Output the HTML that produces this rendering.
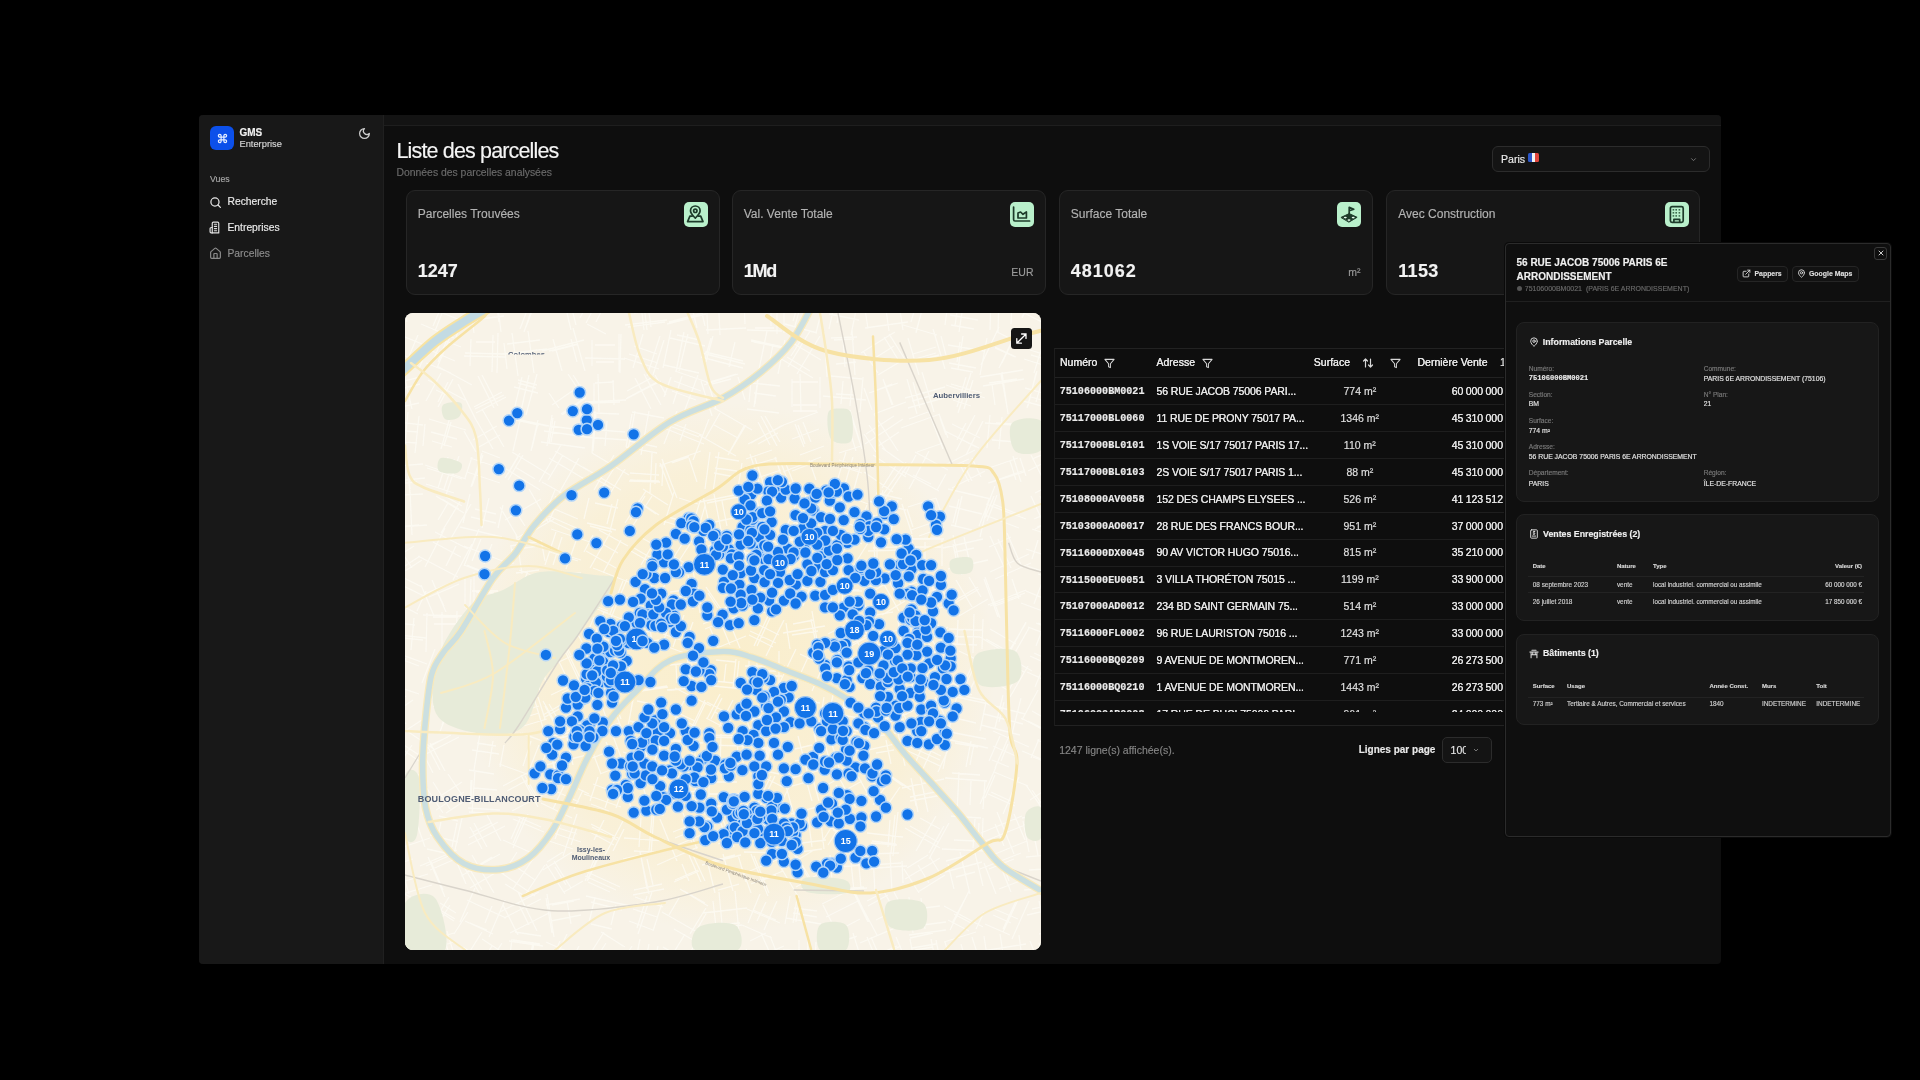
<!DOCTYPE html>
<html><head><meta charset="utf-8">
<style>
*{box-sizing:border-box;margin:0;padding:0}
html,body{width:1920px;height:1080px;overflow:hidden;background:#000}
#root{position:absolute;left:0;top:0;width:1920px;height:1080px;will-change:transform}
.b{position:absolute}
.t{position:absolute;white-space:nowrap;line-height:1;-webkit-text-stroke:0.15px currentColor}
.s{font-family:"Liberation Sans",sans-serif}
.m{font-family:"Liberation Mono",monospace}
i{display:block}
</style></head><body><div id="root">
<div class="b" style="left:199px;top:115px;width:1522px;height:849px;background:#0e0e0e;border-radius:4px"></div>
<div class="b" style="left:199px;top:115px;width:185px;height:849px;background:#181818;border-radius:4px 0 0 4px"></div>
<div class="b" style="left:383px;top:115px;width:1px;height:849px;background:#202020"></div>
<div class="b" style="left:384px;top:115px;width:1337px;height:11px;background:#131313;border-bottom:1px solid #1e1e1e;border-radius:0 4px 0 0"></div>
<div class="b" style="left:210px;top:126px;width:24px;height:24px;background:#0c50ea;border-radius:6px"></div>
<svg class="b" style="left:216.5px;top:132.8px" width="11" height="11" viewBox="0 0 24 24" fill="none" stroke="#e8f0ff" stroke-width="2.6" stroke-linecap="round" stroke-linejoin="round"><path d="M15 6v12a3 3 0 1 0 3-3H6a3 3 0 1 0 3 3V6a3 3 0 1 0-3 3h12a3 3 0 1 0-3-3"/></svg>
<div class="t s" style="left:239.50px;top:127.53px;font-size:10px;color:#f0f0f0;font-weight:bold;">GMS</div>
<div class="t s" style="left:239.50px;top:139.63px;font-size:9.3px;color:#d8d8d8;">Enterprise</div>
<svg class="b" style="left:358px;top:127px" width="13" height="13" viewBox="0 0 24 24" fill="none" stroke="#cfcfcf" stroke-width="2.3" stroke-linecap="round" stroke-linejoin="round"><path d="M12 3a6 6 0 0 0 9 9 9 9 0 1 1-9-9Z"/></svg>
<div class="t s" style="left:210.00px;top:175.05px;font-size:8.8px;color:#a8a8a8;">Vues</div>
<svg class="b" style="left:209px;top:196px" width="13" height="13" viewBox="0 0 24 24" fill="none" stroke="#e8e8e8" stroke-width="2.3" stroke-linecap="round"><circle cx="11" cy="11" r="7.5"/><path d="m21 21-4.3-4.3"/></svg>
<div class="t s" style="left:227.50px;top:197.28px;font-size:10.3px;color:#ececec;">Recherche</div>
<svg class="b" style="left:209px;top:221px" width="13" height="13" viewBox="0 0 24 24" fill="none" stroke="#e0e0e0" stroke-width="2.2" stroke-linecap="round" stroke-linejoin="round"><path d="M6 22V4a2 2 0 0 1 2-2h8a2 2 0 0 1 2 2v18Z"/><path d="M6 12H4a2 2 0 0 0-2 2v6a2 2 0 0 0 2 2h2"/><path d="M10 6h4M10 10h4M10 14h4M10 18h4"/></svg>
<div class="t s" style="left:227.50px;top:222.98px;font-size:10.3px;color:#ececec;">Entreprises</div>
<svg class="b" style="left:209px;top:247px" width="13" height="13" viewBox="0 0 24 24" fill="none" stroke="#8a8a8a" stroke-width="2.2" stroke-linecap="round" stroke-linejoin="round"><path d="M3 10a2 2 0 0 1 .7-1.5l7-6a2 2 0 0 1 2.6 0l7 6A2 2 0 0 1 21 10v9a2 2 0 0 1-2 2H5a2 2 0 0 1-2-2z"/><path d="M15 21v-8a1 1 0 0 0-1-1h-4a1 1 0 0 0-1 1v8"/></svg>
<div class="t s" style="left:227.50px;top:249.28px;font-size:10.3px;color:#8e8e8e;">Parcelles</div>
<div class="t s" style="left:396.50px;top:141.30px;font-size:21.5px;color:#f5f5f5;letter-spacing:-0.85px">Liste des parcelles</div>
<div class="t s" style="left:396.50px;top:168.20px;font-size:10.4px;color:#6b6b6b;">Données des parcelles analysées</div>
<div class="b" style="left:1492px;top:146px;width:218px;height:26px;background:#141414;border:1px solid #2c2c2c;border-radius:6px"></div>
<div class="t s" style="left:1501.00px;top:153.73px;font-size:10.6px;color:#ececec;">Paris</div>
<div class="b" style="left:1528px;top:153px;width:11px;height:9px;border-radius:1.5px;overflow:hidden;display:flex"><i style="flex:1;background:#2b56c9"></i><i style="flex:1;background:#f2f2f2"></i><i style="flex:1;background:#e0453c"></i></div>
<svg class="b" style="left:1689px;top:155px" width="9" height="9" viewBox="0 0 24 24" fill="none" stroke="#777" stroke-width="2.5"><path d="m6 9 6 6 6-6"/></svg>
<div class="b" style="left:405.5px;top:190px;width:314px;height:104.5px;background:#161616;border:1px solid #262626;border-radius:9px"></div>
<div class="t s" style="left:417.75px;top:208.24px;font-size:12px;color:#b3b3b3;">Parcelles Trouvées</div>
<div class="t s" style="left:417.75px;top:261.76px;font-size:18px;color:#f2f2f2;font-weight:bold;">1247</div>
<div class="b" style="left:684.0px;top:202px;width:24px;height:24.5px;background:#b9f0cb;border-radius:5px"></div>
<svg class="b" style="left:684.0px;top:202px" width="24" height="24" viewBox="0 0 24 24" stroke="#1d3b2a" stroke-width="1.7" stroke-linecap="round" stroke-linejoin="round"><path d="M11.3,16.2 C9,13.6 6.5,11.6 6.5,8.8 a4.8,4.8 0 0 1 9.6,0 c0,2.8 -2.5,4.8 -4.8,7.4Z" fill="none"/><circle cx="11.3" cy="8.8" r="1.7" fill="none"/><path d="M8.2,14.1 H5.9 L3.6,19.6 H19 L16.7,14.1 H14.4" fill="none"/></svg>
<div class="b" style="left:731.5px;top:190px;width:314px;height:104.5px;background:#161616;border:1px solid #262626;border-radius:9px"></div>
<div class="t s" style="left:743.75px;top:208.24px;font-size:12px;color:#b3b3b3;">Val. Vente Totale</div>
<div class="t s" style="left:743.75px;top:261.76px;font-size:18px;color:#f2f2f2;font-weight:bold;letter-spacing:-1.2px">1Md</div>
<div class="t s" style="right:886.50px;top:266.61px;font-size:10.5px;color:#9a9a9a;">EUR</div>
<div class="b" style="left:1010.0px;top:202px;width:24px;height:24.5px;background:#b9f0cb;border-radius:5px"></div>
<svg class="b" style="left:1010.0px;top:202px" width="24" height="24" viewBox="0 0 24 24" stroke="#1d3b2a" stroke-width="1.7" stroke-linecap="round" stroke-linejoin="round"><path d="M3.6,5 V17.6 a1.4,1.4 0 0 0 1.4,1.4 H19.6" fill="none"/><path d="M8,16 V11 L10.6,10 L13,12.3 L16.4,9.9 V16 Z" fill="none"/></svg>
<div class="b" style="left:1058.5px;top:190px;width:314px;height:104.5px;background:#161616;border:1px solid #262626;border-radius:9px"></div>
<div class="t s" style="left:1070.75px;top:208.24px;font-size:12px;color:#b3b3b3;">Surface Totale</div>
<div class="t s" style="left:1070.75px;top:261.76px;font-size:18px;color:#f2f2f2;font-weight:bold;letter-spacing:1px">481062</div>
<div class="t s" style="right:559.50px;top:266.61px;font-size:10.5px;color:#9a9a9a;">m²</div>
<div class="b" style="left:1337.0px;top:202px;width:24px;height:24.5px;background:#b9f0cb;border-radius:5px"></div>
<svg class="b" style="left:1337.0px;top:202px" width="24" height="24" viewBox="0 0 24 24" stroke="#1d3b2a" stroke-width="1.7" stroke-linecap="round" stroke-linejoin="round"><path d="M12.2,13.2 V5.3 L16.8,7.2 L12.2,8.8" fill="none"/><path d="M4.3,15.3 L12.2,11.6 L20.1,15.3 L12.2,20 Z" fill="#1d3b2a" stroke-width="1"/><ellipse cx="8.3" cy="15.6" rx="1.5" ry="0.8" fill="#eafff0" stroke="none"/><ellipse cx="16.2" cy="15.6" rx="1.5" ry="0.8" fill="#eafff0" stroke="none"/><ellipse cx="12" cy="18.1" rx="1.5" ry="0.8" fill="#eafff0" stroke="none"/></svg>
<div class="b" style="left:1386px;top:190px;width:314px;height:104.5px;background:#161616;border:1px solid #262626;border-radius:9px"></div>
<div class="t s" style="left:1398.25px;top:208.24px;font-size:12px;color:#b3b3b3;">Avec Construction</div>
<div class="t s" style="left:1398.25px;top:261.76px;font-size:18px;color:#f2f2f2;font-weight:bold;letter-spacing:0.3px">1153</div>
<div class="b" style="left:1664.5px;top:202px;width:24px;height:24.5px;background:#b9f0cb;border-radius:5px"></div>
<svg class="b" style="left:1664.5px;top:202px" width="24" height="24" viewBox="0 0 24 24" stroke="#1d3b2a" stroke-width="1.7" stroke-linecap="round" stroke-linejoin="round"><rect x="5.4" y="4.6" width="12.8" height="15.8" rx="1.6" fill="none"/><g fill="#3d6b4c" stroke="none"><rect x="7.6" y="7" width="1.6" height="1.6"/><rect x="10.4" y="7" width="1.6" height="1.6"/><rect x="13.6" y="7" width="1.6" height="1.6"/><rect x="7.6" y="10" width="1.6" height="1.6"/><rect x="10.4" y="10" width="1.6" height="1.6"/><rect x="13.6" y="10" width="1.6" height="1.6"/><rect x="7.6" y="13.1" width="1.6" height="1.6"/><rect x="10.4" y="13.1" width="1.6" height="1.6"/><rect x="13.6" y="13.1" width="1.6" height="1.6"/></g><path d="M8.9,20.2 V17.3 H14.7 V20.2" fill="none"/></svg>
<div class="b" style="left:405px;top:313px;width:636px;height:637px;border-radius:8px;overflow:hidden;background:#f2efe6"><svg width="636" height="637" viewBox="0 0 636 637" style="display:block">
<rect width="636" height="637" fill="#f8f3e8"/>
<defs><radialGradient id="warm" cx="325" cy="355" r="265" gradientUnits="userSpaceOnUse"><stop offset="0" stop-color="#fbecc0" stop-opacity="0.7"/><stop offset="0.75" stop-color="#fbecc0" stop-opacity="0.4"/><stop offset="1" stop-color="#fbecc0" stop-opacity="0"/></radialGradient></defs>
<rect width="636" height="637" fill="url(#warm)"/>
<path d="M-20,-10L14,-17M-20,-12L-13,19M-11,-3L8,-7M-2,-9L2,9M-10,-1L9,-5M-19,-11L-13,18M-5,22L17,31M13,22L-4,62M-14,37L12,48M21,38L14,56M-17,48L6,58M-9,25L-17,44M-8,95L14,90M-1,62L7,96M-17,79L15,71M-19,74L-15,94M-20,73L15,64M-6,68L0,94M-13,117L13,119M14,103L10,140M-16,108L18,112M3,99L-1,141M-14,128L12,130M20,111L18,133M-10,171L12,169M-1,151L0,170M-19,169L20,165M1,139L5,180M-19,154L18,151M2,143L5,176M-21,215L22,212M-2,182L-0,218M-19,183L18,181M5,177L7,222M-12,214L14,212M-6,182L-4,218M-10,245L9,233M-18,240L-8,257M-3,255L15,243M-16,233L-1,257M-0,258L17,247M-11,227L7,255M-24,282L13,301M-1,263L-14,289M-16,266L21,284M21,278L12,298M-5,263L17,274M-3,261L-16,289M-8,310L10,312M-2,306L-5,334M-22,320L21,325M9,305L6,337M-19,323L18,327M-15,297L-20,339M-24,368L14,381M1,345L-9,372M-11,339L22,351M-13,345L-20,364M-7,345L14,353M-3,349L-9,367M-16,394L1,383M-10,395L1,411M-6,422L23,403M-19,398L-5,418M-15,403L8,387M-24,392L-1,425M-12,430L14,448M-8,422L-20,439M-7,428L14,442M17,438L5,457M-7,412L29,436M7,432L-5,450M-15,460L17,462M20,460L18,502M-13,487L12,488M-5,468L-6,491M-17,490L16,492M12,467L10,494M-17,539L25,525M7,497L20,534M-14,538L22,526M-16,508L-5,539M-11,518L7,511M-22,514L-14,538M-19,574L23,561M-8,540L4,581M-15,585L27,572M-9,550L-2,573M-14,553L8,546M-16,547L-6,580M-20,605L7,619M15,585L-4,620M-8,577L24,594M24,590L5,625M-18,602L9,616M-2,577L-20,611M-19,656L24,647M-7,627L-1,655M-15,661L22,654M-15,632L-11,653M-24,631L18,622M10,627L14,648M16,11L49,25M41,-17L28,13M37,-17L54,-10M64,-9L51,24M20,-7L60,9M45,-20L30,18M33,25L56,34M37,26L28,48M27,38L50,48M41,29L33,49M21,50L46,60M45,24L32,55M23,67L60,87M48,66L33,94M31,77L48,85M43,69L33,89M32,53L67,72M36,60L21,88M26,119L52,126M45,104L36,136M27,128L47,134M46,109L39,133M24,106L61,117M45,104L36,136M21,171L49,180M49,146L39,176M22,155L57,166M43,144L33,175M20,152L61,166M54,143L41,182M31,183L59,200M66,191L45,227M38,182L57,193M43,190L33,207M37,186L54,196M56,187L36,220M30,219L63,236M51,233L41,253M13,243L53,264M40,215L20,254M28,229L56,244M67,231L48,267M24,284L54,271M29,272L39,293M20,281L54,266M16,272L29,303M31,281L48,274M27,267L41,299M18,302L63,303M52,298L51,342M28,304L53,304M22,300L21,339M29,311L51,311M37,299L37,341M33,347L54,355M62,351L49,382M28,364L46,371M30,336L17,370M32,354L50,361M63,350L50,383M27,377L65,392M31,375L16,413M28,393L53,403M50,381L34,421M33,388L53,395M45,389L37,412M25,432L43,424M23,434L35,457M19,442L54,424M25,430L40,458M22,435L46,422M17,438L28,460M31,497L59,479M21,474L38,500M41,500L58,489M43,461L59,485M23,491L57,469M28,469L45,496M22,536L49,542M57,505L49,541M25,522L53,529M36,509L32,528M34,503L53,508M52,510L47,534M15,553L52,537M47,538L61,571M25,557L48,547M26,549L38,577M21,553L48,541M23,544L40,584M29,595L49,608M63,599L49,621M35,590L51,600M44,584L28,610M30,594L50,606M45,592L35,608M22,628L49,620M20,636L25,654M26,636L49,629M39,624L48,655M26,655L60,645M42,618L54,658M57,-4L101,-10M64,-17L69,20M71,7L90,4M91,-23L96,19M62,8L99,3M91,-12L94,9M60,40L100,41M93,20L92,60M59,43L101,44M88,22L87,59M71,29L90,29M66,26L65,53M71,100L101,84M77,62L93,93M69,94L97,79M53,71L71,107M70,96L99,82M73,63L89,95M74,134L95,122M59,118L71,139M74,134L95,122M77,96L99,134M68,127L92,113M70,105L88,136M62,159L95,170M67,144L60,165M65,145L101,157M78,142L67,173M77,138L95,145M77,140L66,174M66,204L91,210M84,185L77,215M70,196L91,201M98,192L93,215M55,214L97,224M65,181L58,210M59,252L87,263M76,226L67,248M62,252L84,261M87,231L79,251M59,233L100,249M74,216L59,253M61,295L98,296M69,259L69,301M71,279L89,280M60,264L60,295M67,278L93,278M66,266L65,293M74,335L92,331M85,298L94,338M56,310L98,300M84,297L93,339M64,315L92,309M71,299L81,343M66,353L95,356M72,349L70,369M62,342L102,346M74,338L69,381M69,349L94,351M82,349L79,372M62,421L103,415M90,381L95,415M61,420L104,413M79,381L85,418M59,385L96,379M75,381L81,419M72,430L91,433M99,432L95,454M67,437L94,441M75,420L69,457M64,457L89,461M88,428L84,454M69,475L92,477M67,467L66,491M63,495L95,497M70,458L67,500M64,499L94,501M66,467L65,491M68,519L86,510M65,514L77,536M63,532L100,513M82,502L96,528M64,525L93,509M69,510L82,534M56,563L95,541M59,554L75,581M65,575L100,554M64,555L77,577M62,559L87,544M67,542L89,580M65,610L82,617M70,575L55,609M60,608L88,621M87,593L80,610M62,587L101,605M100,587L84,624M77,626L94,637M77,619L60,646M58,634L94,658M97,630L78,660M62,641L87,657M87,633L77,649M103,-17L144,-3M130,-10L121,14M113,-18L137,-10M131,-16L119,19M116,-18L135,-11M127,-16L115,16M102,31L135,27M99,30L102,56M98,41L142,36M123,18L129,60M108,41L132,37M107,20L113,63M113,70L131,75M124,62L116,98M109,74L133,80M132,61L121,102M113,67L132,72M117,64L110,93M103,104L142,113M133,107L126,138M101,104L144,113M117,99L108,138M111,107L134,112M133,110L127,135M110,154L130,166M118,142L103,167M98,154L135,177M115,140L100,165M107,139L145,162M113,144L103,161M100,207L136,186M124,176L143,209M111,228L149,206M108,194L120,213M112,225L145,205M95,194L113,225M106,237L133,233M106,233L108,251M105,233L132,229M136,227L140,248M111,260L134,257M111,221L117,261M112,274L130,281M124,267L114,293M103,291L124,300M123,258L107,298M114,257L141,268M139,267L124,303M102,309L119,299M128,301L141,322M107,339L143,317M108,313L121,334M115,345L144,327M102,309L122,341M109,353L127,349M125,337L135,379M100,370L142,360M99,352L104,376M98,364L141,354M135,342L141,370M104,402L134,393M133,384L140,406M105,417L142,406M127,378L138,415M108,408L134,400M109,389L117,415M115,420L137,428M134,432L125,455M117,420L135,427M126,428L118,453M94,451L133,465M143,435L134,458M98,473L126,458M120,463L135,489M102,478L128,464M116,462L133,494M107,498L143,479M121,468L131,486M108,506L139,519M123,501L108,535M113,504L136,514M115,506L106,526M98,527L129,541M119,504L108,530M110,553L130,567M140,552L120,582M100,571L118,582M130,543L108,576M95,559L130,583M112,539L98,561M95,599L134,579M113,579L132,618M99,605L136,586M113,590L124,612M105,620L144,600M98,592L113,622M108,627L135,631M107,626L104,650M104,628L138,633M128,629L124,652M110,619L136,623M129,630L125,652M138,-7L177,-16M160,-10L164,9M142,-12L170,-19M158,-18L166,17M145,-13L167,-18M164,-16L171,12M137,38L179,27M148,26L157,58M144,38L173,31M168,15L180,58M147,38L170,32M166,26L172,49M157,102L181,85M163,61L179,85M156,101L181,84M144,80L154,95M147,92L176,72M168,62L179,79M145,113L176,117M148,105L144,131M139,118L181,124M147,102L142,133M136,129L180,135M150,108L146,129M137,169L164,184M156,132L134,169M144,145L181,167M174,145L154,180M150,138L184,158M158,142L143,167M144,207L165,217M155,182L144,209M147,195L173,206M151,183L141,205M137,200L176,217M150,177L137,208M146,216L185,229M151,219L140,252M143,237L176,247M157,224L148,252M145,239L173,248M171,228L161,256M141,262L176,260M159,268L160,292M141,292L180,289M157,269L159,292M150,280L170,278M144,266L146,296M145,325L173,310M136,313L152,344M135,314L169,296M162,301L177,329M138,312L166,297M145,303L166,342M146,382L186,363M160,338L177,374M135,358L175,339M150,340L169,380M157,380L177,370M161,336L180,375M140,404L174,385M138,388L159,425M138,402L173,382M140,393L155,421M158,420L179,409M144,391L160,418M145,424L167,419M142,422L151,464M141,452L182,442M143,424L151,462M141,428L172,421M162,425L168,452M144,475L174,489M178,477L169,496M136,490L167,505M165,460L148,496M144,462L184,481M169,469L157,494M150,514L172,521M172,514L166,532M144,528L168,536M172,501L158,543M142,518L176,529M156,509L150,526M138,557L167,539M149,548L166,575M159,579L178,568M141,551L160,581M142,549L158,539M150,554L161,572M141,592L175,586M162,588L166,611M146,608L176,602M142,581L149,624M147,592L169,588M141,585L147,620M142,644L168,656M155,628L148,644M143,638L172,652M162,621L147,653M141,629L181,647M174,633L163,655M194,-24L223,-9M202,-13L191,9M191,-25L225,-7M190,-24L175,5M182,11L201,21M197,-21L181,10M180,45L220,46M187,27L187,53M190,32L210,32M216,21L215,60M191,49L209,49M214,21L214,59M185,90L215,89M189,70L189,91M190,70L209,69M193,61L194,99M180,89L221,87M208,67L209,92M181,116L220,119M202,108L200,133M178,124L222,127M190,98L187,140M189,100L214,101M191,100L188,138M183,162L207,175M220,156L206,179M187,140L224,162M214,147L195,178M178,154L216,177M209,142L189,177M182,210L211,217M213,186L205,218M190,190L213,195M207,191L202,211M185,213L207,219M184,185L179,206M194,229L213,240M188,222L179,239M181,238L211,255M216,227L198,260M194,217L223,233M205,220L185,255M185,291L203,298M222,266L206,305M184,293L203,300M193,266L185,285M188,255L226,270M218,268L205,301M186,320L210,330M189,304L181,323M185,325L207,334M199,304L188,331M196,298L219,307M199,299L185,334M177,356L221,349M197,340L203,380M191,366L210,363M194,346L199,375M188,373L215,369M206,343L211,375M195,417L214,410M208,385L216,406M182,385L204,377M202,376L217,417M179,387L208,376M193,381L206,419M187,445L213,435M208,423L217,447M195,461L218,452M183,427L196,461M190,444L210,436M201,429L209,447M179,481L216,494M209,469L200,495M188,471L215,481M218,476L211,495M186,491L204,498M193,464L185,488M187,514L212,527M219,516L208,538M186,511L215,526M218,508L200,542M185,519L209,532M199,507L189,527M180,558L215,574M194,541L182,568M180,563L211,577M192,540L180,568M183,569L205,579M194,543L183,567M186,611L207,616M190,585L184,609M186,589L217,597M190,584L184,610M181,583L225,593M211,592L206,612M196,619L220,634M227,633L206,667M182,640L208,656M199,619L180,649M198,620L218,633M201,630L191,646M223,14L260,9M238,-17L242,17M229,-0L251,-3M242,-15L246,14M220,12L262,7M235,-16L239,17M229,33L252,41M255,23L242,63M219,45L254,56M259,27L248,62M224,41L253,50M238,21L228,55M221,86L256,68M239,61L256,92M222,78L248,64M230,65L246,96M222,85L254,68M250,62L261,82M224,128L252,134M244,98L236,142M227,99L259,105M230,98L223,137M221,134L252,140M227,101L221,134M224,168L255,169M247,140L245,180M225,160L254,162M258,149L257,173M225,167L254,168M251,150L250,171M235,190L251,201M240,183L225,207M238,176L263,192M247,183L227,214M233,188L254,202M241,178L220,210M229,235L250,247M258,234L243,258M237,225L255,235M260,228L240,263M224,237L251,252M248,231L236,252M228,266L258,284M261,270L240,304M230,272L252,286M247,272L236,290M221,284L245,299M259,277L245,298M224,312L253,308M226,313L229,331M229,331L254,327M228,309L232,334M225,321L255,317M243,301L248,337M223,380L263,374M219,343L226,383M223,379L262,373M222,342L229,382M232,367L250,364M217,342L224,385M232,388L252,392M228,385L224,409M225,408L251,413M230,377L222,418M227,409L249,414M259,386L252,420M218,439L258,453M258,425L244,463M227,423L261,435M247,422L235,458M221,431L261,445M246,429L238,453M221,471L250,461M218,471L228,500M221,471L250,462M235,465L245,495M236,497L253,491M248,461L258,490M219,525L260,528M236,505L234,534M229,538L249,539M247,503L244,538M224,500L259,502M249,499L246,542M228,582L259,576M235,539L244,581M218,546L255,538M242,546L248,572M229,577L257,571M236,544L242,576M230,584L258,594M242,583L232,615M224,608L248,617M257,590L248,618M228,596L252,604M247,579L233,621M225,649L251,654M235,626L230,651M222,640L257,647M253,633L249,651M218,645L259,653M244,631L240,650M264,-16L287,-22M292,-21L300,13M262,11L301,1M292,-21L300,13M264,9L298,0M284,-18L292,15M265,25L300,33M283,21L274,58M272,22L295,27M266,17L258,55M259,52L294,60M279,19L271,59M267,78L291,87M277,63L268,91M269,68L296,78M293,62L278,102M270,58L302,69M266,64L259,84M259,115L299,131M281,111L275,128M266,110L297,122M304,106L288,147M267,114L294,124M272,98L259,131M267,150L284,144M255,150L268,184M254,153L296,138M257,146L272,185M266,149L284,143M284,145L292,169M274,185L293,191M296,185L285,221M258,208L294,219M269,179L259,212M263,204L292,212M300,193L293,217M268,243L283,252M273,215L254,245M265,245L282,256M284,220L264,252M270,218L305,240M285,231L274,248M266,285L295,281M285,268L289,290M268,294L296,290M283,262L288,296M265,279L294,275M288,257L295,300M267,318L291,327M271,293L256,335M258,321L296,334M279,302L268,334M255,331L293,345M288,309L279,334M267,377L295,374M286,342L289,376M262,377L301,374M271,352L272,370M265,352L294,349M282,340L285,380M270,375L306,393M300,387L282,424M267,397L290,408M301,389L284,424M258,397L296,416M279,388L270,406M268,451L291,453M291,419L289,462M264,428L298,430M288,425L286,456M268,427L293,429M291,421L289,460M259,464L299,463M290,467L291,492M259,484L301,482M295,463L296,495M263,480L297,478M267,469L268,492M270,533L296,522M277,506L288,532M270,525L290,517M255,506L272,548M268,519L288,511M278,500L292,536M269,569L294,558M277,551L284,568M252,552L293,534M287,540L300,568M270,567L293,557M284,542L296,569M257,599L292,619M302,599L290,620M279,578L300,590M274,585L264,602M275,576L303,593M301,595L285,621M263,649L280,659M291,630L276,654M269,616L307,638M280,621L263,649M258,634L296,656M293,631L279,656M297,-12L341,-15M339,-13L340,11M306,-18L331,-19M313,-21L315,22M301,17L341,15M301,-18L303,21M297,40L340,51M306,25L300,46M296,44L338,55M330,29L324,54M300,39L338,48M308,23L301,49M301,70L331,61M304,72L311,96M299,72L333,61M296,68L307,103M307,71L326,66M333,64L340,87M294,122L331,143M315,100L300,126M309,95L347,117M341,112L323,142M309,112L333,125M339,113L324,140M310,144L334,148M305,139L300,176M309,160L330,164M337,150L333,175M310,155L332,158M314,139L308,179M302,190L333,184M309,181L317,222M295,189L339,180M298,183L307,224M310,209L333,204M317,188L322,213M303,233L330,225M332,213L345,256M315,259L335,253M306,222L318,263M297,228L333,218M306,221L318,264M315,298L338,283M303,280L313,295M314,300L341,282M301,274L318,299M319,300L339,287M316,269L328,288M307,337L341,323M305,315L313,334M298,311L330,298M315,308L325,332M300,316L332,303M320,298L335,335M311,347L331,349M331,346L328,375M309,368L329,370M334,348L331,375M298,372L339,376M321,351L319,369M302,389L339,409M317,385L306,406M301,405L326,418M315,381L302,406M310,399L326,408M328,387L314,414M302,424L339,425M333,420L332,461M302,432L339,433M316,421L315,459M300,422L341,423M338,425L338,456M304,481L336,481M301,458L300,502M309,469L332,469M304,467L304,492M310,493L329,493M304,461L304,498M297,508L329,496M317,504L329,534M313,531L333,524M327,497L340,532M304,507L323,499M314,505L325,535M302,549L330,542M302,547L310,580M313,577L334,571M318,541L328,578M297,552L336,542M333,542L341,569M305,615L337,612M314,579L318,622M308,612L335,610M308,588L311,614M298,600L342,595M330,578L334,620M306,649L324,657M329,620L313,661M302,652L325,661M324,623L311,655M307,629L337,641M309,620L299,647M349,-19L371,-19M379,-19L379,20M342,17L377,18M372,-21L372,21M350,15L369,15M366,-13L366,13M346,28L378,35M380,27L373,61M346,27L378,34M362,18L353,61M349,29L375,34M368,31L364,52M342,96L374,100M353,64L349,94M349,80L371,83M346,68L344,89M347,70L375,73M353,67L350,91M343,131L379,112M356,103L372,133M353,131L373,120M360,103L375,129M346,130L376,113M353,109L365,132M341,154L372,145M350,145L361,178M341,146L367,137M370,144L378,167M346,167L376,157M345,141L359,184M352,213L373,208M338,184L348,224M350,200L369,195M352,187L359,216M352,212L372,207M344,181L355,224M351,223L377,231M359,221L349,256M339,239L378,250M377,228L368,259M339,244L376,255M374,228L366,258M337,281L377,295M353,255L339,295M348,255L385,268M369,266L358,296M338,292L370,303M363,260L350,297M345,318L371,330M365,305L352,333M344,322L368,334M363,303L349,333M350,310L374,322M379,307L361,343M349,358L371,358M352,349L352,371M343,363L377,363M344,339L344,381M340,353L380,353M374,338L374,382M339,405L379,390M338,398L345,416M346,408L376,397M369,376L383,412M339,409L382,394M355,385L366,415M347,433L374,439M367,427L361,454M338,453L374,461M363,430L359,450M347,432L375,438M366,424L359,457M338,490L366,504M366,463L350,495M339,492L364,504M370,463L352,499M354,462L378,474M386,470L368,507M339,504L381,505M368,500L367,540M339,539L381,540M357,509L357,531M344,511L376,512M360,508L360,532M346,571L378,558M346,541L363,583M353,569L371,562M349,543L364,580M340,560L374,546M337,555L346,580M342,596L375,610M355,581L343,610M348,597L371,607M372,588L359,617M337,612L367,625M361,589L352,608M355,654L374,645M341,636L350,657M342,649L379,633M356,620L372,656M345,628L361,620M365,623L375,648M391,-9L412,-3M394,-12L388,8M380,11L412,20M398,-16L390,13M392,-7L411,-2M419,-12L411,20M386,29L416,47M396,27L386,43M373,44L408,65M405,18L383,54M382,44L405,58M415,23L392,61M388,98L412,98M395,61L396,99M387,69L413,69M415,64L415,95M388,92L412,92M387,66L387,94M395,142L419,133M398,109L406,129M387,126L414,116M393,112L400,131M376,113L413,99M390,111L399,134M385,156L408,148M376,150L389,183M387,158L408,150M404,147L411,167M378,159L416,144M381,151L392,179M385,207L405,216M402,180L387,215M382,187L422,204M398,175L381,215M389,195L411,205M402,189L394,209M382,226L423,236M407,227L400,254M386,226L419,234M394,217L384,257M388,221L419,229M405,228L399,253M385,270L418,281M407,268L398,293M392,273L411,279M394,256L381,295M385,267L419,279M390,259L380,291M387,322L413,318M381,310L385,336M388,311L409,307M406,306L411,331M378,320L420,313M407,298L414,339M395,341L418,352M391,336L375,369M385,360L410,372M404,342L389,375M385,362L408,372M418,353L407,378M392,386L412,389M419,384L413,421M389,407L408,410M384,386L380,408M389,386L415,390M397,390L394,409M390,448L412,443M409,421L417,453M390,451L414,446M393,423L402,458M390,436L407,432M409,418L417,456M376,468L415,457M402,470L407,488M387,473L408,467M408,466L414,488M386,501L423,491M379,466L389,502M381,532L421,527M390,511L393,531M388,540L417,536M415,500L419,536M381,532L421,527M403,504L407,534M391,574L417,559M389,541L411,578M376,557L409,537M375,553L394,585M395,577L417,564M390,540L413,578M388,600L412,604M385,583L380,611M389,595L412,598M394,588L391,609M381,605L416,611M392,586L388,610M378,637L422,638M394,627L394,653M389,655L411,656M403,627L402,654M383,652L416,653M411,629L410,651M424,1L454,7M454,-18L446,22M430,-18L456,-13M437,-13L432,10M431,-20L456,-15M432,-21L424,16M426,25L452,24M438,26L440,54M429,27L449,26M419,19L422,64M431,51L451,49M447,17L450,62M426,63L457,66M438,68L436,91M431,81L449,82M458,64L455,99M418,83L461,87M447,68L445,93M427,109L445,103M444,97L457,136M427,116L449,109M439,99L451,138M434,140L456,133M445,97L457,136M431,150L453,157M456,151L449,176M426,150L457,160M441,139L429,178M434,147L452,153M448,144L438,178M417,200L457,216M462,192L451,221M430,196L450,204M439,181L426,213M429,178L463,191M433,181L422,209M441,221L457,231M444,229L432,248M428,243L443,252M463,230L441,265M421,242L446,258M442,220L423,251M426,277L454,277M438,262L437,298M419,293L461,293M427,267L426,293M423,277L457,278M434,268L434,292M423,321L450,307M446,292L467,330M428,343L466,322M448,296L465,326M437,336L455,326M438,301L454,332M419,368L462,357M435,343L444,377M425,355L451,349M453,347L457,365M419,352L455,344M436,351L440,370M424,392L458,398M440,384L434,415M425,400L454,405M427,386L423,408M421,412L453,418M429,377L421,417M420,429L451,420M426,428L435,458M429,446L452,439M440,429L446,449M424,445L456,436M420,431L428,459M421,488L457,468M433,463L451,495M436,494L454,484M448,454L466,487M415,476L450,456M431,472L442,492M422,512L455,532M438,496L417,529M439,499L460,511M440,509L431,525M428,517L448,529M443,500L423,532M424,577L459,574M453,542L456,575M421,578L462,575M425,542L428,580M420,555L459,552M445,539L449,579M421,604L455,587M448,575L464,609M417,591L447,576M418,592L433,622M436,616L455,606M447,576L463,609M422,633L451,624M448,620L458,652M427,628L444,623M419,626L431,663M421,633L452,623M427,625L437,660M457,-11L499,-17M479,-18L484,18M460,15L503,9M459,-11L463,16M462,-12L494,-16M492,-22L498,17M456,40L490,19M479,24L494,48M470,45L489,33M484,21L499,45M473,62L503,44M458,38L473,60M469,101L501,89M459,75L467,97M464,80L493,70M478,66L488,92M469,78L487,71M478,66L487,92M460,131L498,106M459,121L471,139M473,133L494,119M464,112L481,138M461,121L489,103M469,101L493,138M477,135L504,154M501,149L477,183M459,159L488,179M492,151L477,175M468,142L501,164M504,150L480,186M463,188L501,197M493,187L486,218M465,202L492,208M485,186L479,215M471,180L497,186M478,177L468,220M468,235L492,234M469,227L470,254M471,226L489,225M494,225L495,255M463,238L497,237M472,229L472,251M465,280L487,267M480,261L496,290M477,302L500,288M486,257L503,286M462,271L482,260M472,259L494,298M467,333L496,328M493,308L496,327M459,323L501,316M469,309L473,334M466,303L488,299M468,303L474,340M468,360L490,352M477,339L491,378M471,369L493,362M482,336L496,378M472,367L491,360M485,336L499,376M466,388L489,384M478,379L485,420M460,410L502,401M466,389L471,415M464,413L499,406M473,383L480,419M462,425L491,420M459,426L466,461M463,437L494,430M481,427L486,451M471,440L489,437M493,420L500,453M475,456L504,475M495,474L480,496M480,460L498,473M479,456L457,488M472,455L506,477M486,465L468,492M462,520L498,524M485,507L483,534M467,528L491,531M490,502L486,540M466,530L492,532M493,499L488,543M463,552L496,550M497,548L498,570M463,541L494,540M485,540L487,579M457,556L502,553M468,541L470,580M462,588L481,578M457,594L472,622M471,607L491,597M489,579L502,604M463,593L483,582M478,577L499,614M455,630L490,615M462,624L479,665M464,647L496,633M466,624L482,661M467,644L492,633M491,624L499,643M508,-22L542,-12M522,-21L511,19M509,-22L541,-12M522,-22L511,20M498,12L532,22M513,-15L506,9M508,41L531,34M503,25L514,62M509,49L534,42M536,23L542,46M510,46L531,40M528,16L540,56M503,95L542,84M508,69L515,95M500,85L540,74M502,66L512,101M507,88L536,80M517,59L529,99M512,139L538,130M523,97L538,136M496,115L535,101M534,101L543,125M504,106L523,99M535,105L541,122M510,139L543,157M511,142L500,162M508,162L526,171M524,138L504,176M497,158L534,178M541,161L532,177M506,217L541,205M497,191L507,221M503,194L531,185M502,196L508,214M514,223L539,214M531,185L538,205M505,226L535,225M507,222L507,258M501,226L539,226M520,229L520,251M504,234L536,234M537,226L537,253M507,305L546,291M524,265L533,289M504,272L528,264M501,277L507,295M506,285L534,275M517,266L527,292M509,336L539,316M512,305L531,333M506,339L543,314M522,296L543,327M507,324L529,309M505,303L530,340M505,357L534,353M503,340L509,384M500,343L534,338M535,345L539,370M507,366L535,362M508,350L511,373M509,421L544,404M530,384L539,401M511,413L535,401M518,383L533,412M497,403L537,384M494,392L511,426M504,433L535,447M543,437L533,459M501,437L535,453M523,421L508,455M507,429L536,443M532,425L517,458M505,488L537,482M506,465L513,499M497,475L539,466M515,462L523,499M505,484L535,478M507,472L511,493M505,513L533,529M531,503L511,538M515,505L535,516M539,513L524,540M500,515L535,535M544,510L524,546M500,566L535,545M525,544L536,562M502,555L523,542M499,556L514,580M513,579L540,562M513,552L524,570M504,622L541,617M516,585L520,616M502,614L541,609M504,584L508,620M503,597L535,593M508,587L511,615M510,637L528,634M505,626L511,659M505,625L528,620M526,626L531,651M507,635L531,631M531,627L535,647M546,12L569,16M560,-20L554,19M545,2L573,7M544,-18L540,12M542,-8L579,-2M554,-16L550,13M544,50L571,55M558,23L553,56M546,55L568,59M582,25L575,62M543,32L579,38M555,29L552,49M546,71L577,80M566,60L553,100M548,87L566,93M568,67L559,96M541,72L580,85M561,64L552,94M547,111L575,125M570,102L551,138M540,118L574,135M561,110L552,127M542,119L571,134M578,108L561,142M546,154L564,146M567,145L576,164M536,154L570,137M558,150L567,168M547,175L580,158M555,152L564,169M544,193L577,201M584,185L575,224M546,212L567,217M557,183L550,214M543,176L586,186M554,186L548,210M538,235L578,226M559,224L566,255M550,239L569,235M548,222L557,262M543,256L583,247M548,231L553,254M549,288L573,274M551,267L567,294M550,290L574,276M564,264L576,284M554,303L583,286M538,278L551,301M544,316L577,317M553,307L552,332M547,331L572,332M569,301L568,340M545,323L575,324M578,306L577,336M554,338L581,351M569,354L561,371M545,369L563,377M568,351L558,372M538,368L567,382M578,351L564,379M546,404L571,410M553,378L544,417M542,382L584,391M551,387L546,408M544,380L583,388M581,389L575,418M541,426L583,435M569,431L565,452M545,419L581,426M546,417L538,456M550,430L573,434M566,428L561,454M540,465L582,468M554,459L552,500M541,465L581,468M580,467L578,496M547,460L575,462M566,468L565,492M546,503L576,505M570,506L568,535M549,527L570,528M574,510L573,531M537,536L581,538M578,505L577,537M540,559L577,549M555,539L565,581M541,548L571,540M570,540L578,573M551,564L570,559M543,551L549,576M543,607L564,618M579,599L571,616M539,593L578,614M564,578L545,617M549,601L566,610M561,584L547,610M552,653L574,646M567,624L575,649M539,629L571,619M540,629L549,661M547,656L580,646M556,631L561,649M583,-16L618,-16M586,-17L585,17M586,-6L614,-6M607,-11L606,11M579,-14L622,-13M594,-20L593,20M590,35L610,44M594,14L576,52M592,19L621,33M606,31L597,50M590,34L611,44M608,26L594,55M584,70L612,66M587,71L590,92M578,73L619,66M597,59L603,101M575,64L618,57M596,61L603,100M587,127L611,129M611,110L609,132M591,110L610,111M597,104L594,136M580,110L622,113M585,102L582,135M583,170L620,157M605,148L611,167M581,156L613,145M615,145L621,163M584,170L619,159M608,143L616,169M581,191L621,206M590,173L574,213M588,191L615,202M589,183L580,205M580,202L614,215M592,182L582,208M584,234L606,224M585,223L603,263M590,266L626,250M593,226L606,255M585,259L624,241M602,220L616,252M583,292L621,277M607,266L614,286M590,293L616,283M580,264L595,305M585,293L620,280M579,266L593,304M575,324L608,344M621,309L602,344M585,316L611,331M621,310L601,343M581,326L604,339M624,315L608,343M589,336L627,358M616,355L604,377M583,365L604,378M597,341L582,367M592,343L619,359M623,353L605,384M582,391L620,401M616,385L607,421M576,412L615,422M599,389L594,409M579,401L618,411M598,382L590,415M587,447L604,454M603,431L596,448M588,418L624,434M604,423L590,455M588,433L613,444M595,423L584,448M586,479L610,490M590,462L580,485M583,481L610,493M614,464L598,501M589,459L623,473M591,454L575,491M576,520L617,503M590,511L599,533M590,541L622,528M609,501L620,527M580,528L620,512M592,499L609,541M594,576L615,568M598,551L604,568M575,556L616,540M591,542L606,579M584,556L609,546M579,550L591,581M587,595L613,606M624,588L607,626M588,602L606,610M611,588L598,616M580,611L605,622M613,587L598,619M582,644L618,638M614,622L618,653M577,638L621,631M579,623L585,663M585,650L617,645M595,621L601,659M619,-0L653,17M629,-20L617,4M627,-23L666,-3M659,-3L649,17M623,-4L653,11M630,-21L617,5M626,42L651,49M654,31L646,55M625,37L654,46M663,29L653,63M619,46L654,57M642,18L629,60M626,84L650,91M631,60L623,93M618,88L656,98M637,68L631,89M620,75L660,86M632,58L622,95M628,117L646,109M627,110L638,136M627,146L667,129M623,113L634,137M636,141L658,132M628,109L639,137M623,158L648,145M626,142L646,182M625,157L646,146M648,139L661,166M630,180L662,164M644,143L656,167M630,216L658,203M635,183L649,216M632,214L656,204M626,183L644,222M629,206L652,196M640,186L650,209M627,216L665,229M647,228L638,254M622,253L646,261M633,227L627,246M621,236L658,248M651,228L642,256M633,261L658,270M653,262L637,303M621,278L655,292M655,271L645,297M616,290L651,303M639,264L629,291M631,310L653,319M660,310L648,340M623,314L657,327M659,316L651,336M633,310L652,318M642,304L631,333M622,359L653,373M643,343L630,374M625,343L662,360M659,346L642,383M629,340L662,355M656,350L643,379M616,405L650,423M660,390L643,422M623,408L643,418M656,387L639,420M627,398L649,410M633,377L617,407M632,427L654,436M634,426L626,445M617,438L658,455M656,432L646,457M628,444L646,451M658,433L647,458M634,490L652,478M627,477L638,493M625,487L652,469M645,465L656,481M639,497L656,485M621,472L641,501M622,517L655,510M625,503L633,542M618,512L658,505M649,502L655,534M617,505L656,498M618,508L624,539M621,544L656,541M647,542L650,576M624,557L655,555M642,548L645,572M619,577L664,573M650,537L654,581M634,621L654,617M637,590L641,611M622,602L657,594M645,583L651,613M627,596L650,591M634,588L639,613M628,655L658,643M634,630L642,652M632,652L654,643M625,628L637,659M622,655L664,640M641,616L657,657" stroke="#fefcf7" stroke-opacity="0.7" stroke-width="1.3" fill="none"/>
<path d="M98.0,277.0 C109.5,271.5 119.7,261.5 135.0,259.0 C150.3,256.5 177.7,260.2 190.0,262.0 C202.3,263.8 211.8,260.0 209.0,270.0 C206.2,280.0 182.3,308.8 173.0,322.0 C163.7,335.2 159.0,341.2 153.0,349.0 C147.0,356.8 142.8,358.2 137.0,369.0 C131.2,379.8 127.8,405.3 118.0,414.0 C108.2,422.7 92.3,423.0 78.0,421.0 C63.7,419.0 39.5,414.7 32.0,402.0 C24.5,389.3 27.3,363.3 33.0,345.0 C38.7,326.7 55.2,303.3 66.0,292.0 C76.8,280.7 86.5,282.5 98.0,277.0 Z" fill="#e7ebd9"/>
<path d="M571.0,342.0 C576.8,336.3 603.0,333.7 610.0,338.0 C617.0,342.3 618.8,362.3 613.0,368.0 C607.2,373.7 582.0,376.3 575.0,372.0 C568.0,367.7 565.2,347.7 571.0,342.0 Z" fill="#e7ebd9"/>
<path d="M294.0,614.0 C300.7,609.8 323.5,608.2 330.0,612.0 C336.5,615.8 339.7,632.8 333.0,637.0 C326.3,641.2 296.5,640.8 290.0,637.0 C283.5,633.2 287.3,618.2 294.0,614.0 Z" fill="#e7ebd9"/>
<path d="M400.0,565.0 C406.3,563.0 433.2,564.5 440.0,567.0 C446.8,569.5 447.3,578.0 441.0,580.0 C434.7,582.0 408.8,581.5 402.0,579.0 C395.2,576.5 393.7,567.0 400.0,565.0 Z" fill="#e7ebd9"/>
<path d="M483.0,589.0 C488.5,585.0 512.2,585.7 518.0,590.0 C523.8,594.3 523.5,611.0 518.0,615.0 C512.5,619.0 490.8,618.3 485.0,614.0 C479.2,609.7 477.5,593.0 483.0,589.0 Z" fill="#e7ebd9"/>
<path d="M415.0,612.0 C419.3,607.8 436.7,607.8 441.0,612.0 C445.3,616.2 445.3,632.8 441.0,637.0 C436.7,641.2 419.3,641.2 415.0,637.0 C410.7,632.8 410.7,616.2 415.0,612.0 Z" fill="#e7ebd9"/>
<path d="M621.0,500.0 C623.3,495.2 633.5,490.8 636.0,495.0 C638.5,499.2 638.3,520.2 636.0,525.0 C633.7,529.8 624.5,528.2 622.0,524.0 C619.5,519.8 618.7,504.8 621.0,500.0 Z" fill="#e7ebd9"/>
<path d="M424.0,98.0 C427.0,93.7 440.3,95.0 444.0,100.0 C447.7,105.0 449.0,123.7 446.0,128.0 C443.0,132.3 429.7,131.0 426.0,126.0 C422.3,121.0 421.0,102.3 424.0,98.0 Z" fill="#e7ebd9"/>
<path d="M607.0,110.0 C611.3,105.0 631.2,103.5 636.0,108.0 C640.8,112.5 640.3,132.0 636.0,137.0 C631.7,142.0 614.8,142.5 610.0,138.0 C605.2,133.5 602.7,115.0 607.0,110.0 Z" fill="#e7ebd9"/>
<path d="M0.0,463.0 C2.3,453.5 12.0,455.2 14.0,465.0 C16.0,474.8 14.3,512.5 12.0,522.0 C9.7,531.5 2.0,531.8 0.0,522.0 C-2.0,512.2 -2.3,472.5 0.0,463.0 Z" fill="#e7ebd9"/>
<path d="M546.0,247.0 C549.0,244.5 562.7,243.0 566.0,245.0 C569.3,247.0 569.0,256.5 566.0,259.0 C563.0,261.5 551.3,262.0 548.0,260.0 C544.7,258.0 543.0,249.5 546.0,247.0 Z" fill="#e7ebd9"/>
<path d="M38.0,92.0 C40.7,89.3 53.3,88.0 56.0,90.0 C58.7,92.0 56.7,101.3 54.0,104.0 C51.3,106.7 42.7,108.0 40.0,106.0 C37.3,104.0 35.3,94.7 38.0,92.0 Z" fill="#e7ebd9"/>
<path d="M0.0,590.0 C5.0,581.3 23.3,577.2 30.0,585.0 C36.7,592.8 45.0,628.3 40.0,637.0 C35.0,645.7 6.7,644.8 0.0,637.0 C-6.7,629.2 -5.0,598.7 0.0,590.0 Z" fill="#e7ebd9"/>
<path d="M427.0,100.0 C429.8,95.2 441.8,93.8 445.0,98.0 C448.2,102.2 448.8,120.2 446.0,125.0 C443.2,129.8 431.2,131.2 428.0,127.0 C424.8,122.8 424.2,104.8 427.0,100.0 Z" fill="#e7ebd9"/>
<path d="M36.0,145.0 C39.7,143.7 53.3,147.5 56.0,150.0 C58.7,152.5 55.7,158.7 52.0,160.0 C48.3,161.3 36.7,160.5 34.0,158.0 C31.3,155.5 32.3,146.3 36.0,145.0 Z" fill="#e7ebd9"/>
<path d="M433.0,0.0 C435.9,14.7 445.7,61.0 450.5,88.0 C455.3,115.0 459.6,142.3 462.0,162.0 C464.4,181.7 464.5,198.7 465.0,206.0" stroke="#d9d4cb" stroke-width="1.4" fill="none"/>
<path d="M494.7,29.4 C503.5,50.0 538.9,132.4 547.7,153.0" stroke="#d9d4cb" stroke-width="1.4" fill="none"/>
<path d="M212.0,262.0 C205.5,272.0 182.8,307.5 173.0,322.0 C163.2,336.5 162.8,334.0 153.0,349.0 C143.2,364.0 122.8,398.5 114.0,412.0 C105.2,425.5 102.3,427.0 100.0,430.0" stroke="#d9d4cb" stroke-width="1.4" fill="none"/>
<path d="M138.0,486.0 C149.3,488.4 187.3,494.3 206.0,500.6 C224.7,506.9 231.3,516.1 250.0,524.0 C268.7,531.9 306.7,543.8 318.0,547.7" stroke="#d9d4cb" stroke-width="1.4" fill="none"/>
<path d="M388.7,577.0 C400.4,577.2 447.3,577.8 459.0,578.0" stroke="#d9d4cb" stroke-width="1.4" fill="none"/>
<path d="M606.6,556.5 C611.5,558.4 631.1,566.1 636.0,568.0" stroke="#d9d4cb" stroke-width="1.4" fill="none"/>
<path d="M603.6,229.7 C605.1,233.1 607.1,245.4 612.5,250.3 C617.9,255.2 632.1,257.6 636.0,259.0" stroke="#d9d4cb" stroke-width="1.4" fill="none"/>
<path d="M0.0,562.0 C9.8,564.5 34.5,571.0 59.0,577.0 C83.5,583.0 115.2,595.7 147.0,597.7 C178.8,599.7 221.5,593.5 250.0,589.0 C278.5,584.5 306.7,574.0 318.0,571.0" stroke="#d9d4cb" stroke-width="1.4" fill="none"/>
<path d="M0.0,465.0 C2.9,460.2 14.8,440.8 17.7,436.0" stroke="#d9d4cb" stroke-width="1.4" fill="none"/>
<path d="M406.0,-5.0 C402.7,0.7 394.3,18.7 386.0,29.4 C377.7,40.1 367.3,49.7 356.0,59.0 C344.7,68.3 333.2,76.7 318.0,85.0 C302.8,93.3 283.7,97.7 265.0,109.0 C246.3,120.3 223.7,140.7 206.0,153.0 C188.3,165.3 171.7,172.8 159.0,182.6 C146.3,192.4 137.8,202.3 129.6,212.0 C121.4,221.7 116.9,232.2 110.0,241.0 C103.1,249.8 97.0,252.2 88.0,265.0 C79.0,277.8 64.3,305.5 56.0,318.0 C47.7,330.5 42.9,332.7 38.0,340.0 C33.1,347.3 29.4,351.0 26.5,362.0 C23.6,373.0 22.1,391.2 20.6,406.0 C19.1,420.8 17.7,435.7 17.7,450.5 C17.7,465.3 18.2,482.4 20.6,494.7 C23.1,506.9 26.0,514.7 32.4,524.0 C38.8,533.3 48.7,545.2 59.0,550.6 C69.3,556.0 83.2,557.5 94.0,556.5 C104.8,555.5 114.9,551.1 123.7,544.7 C132.5,538.3 140.1,528.3 147.0,518.0 C153.9,507.7 159.1,495.2 165.0,483.0 C170.9,470.8 175.8,457.4 182.6,444.6 C189.4,431.8 197.7,417.3 206.0,406.0 C214.3,394.7 222.8,386.8 232.6,377.0 C242.4,367.2 250.8,353.8 265.0,347.4 C279.2,341.0 304.3,339.1 318.0,338.6 C331.7,338.1 337.6,341.6 347.4,344.5 C357.2,347.4 365.7,351.6 377.0,356.0 C388.3,360.4 404.2,366.1 415.0,371.0 C425.8,375.9 431.9,379.3 441.7,385.7 C451.5,392.1 464.2,400.0 474.0,409.3 C483.8,418.6 491.3,430.9 500.6,441.7 C509.9,452.5 521.2,464.2 530.0,474.0 C538.8,483.8 545.8,491.3 553.6,500.6 C561.4,509.9 569.6,521.2 577.0,530.0 C584.4,538.8 587.2,545.3 597.7,553.6 C608.2,561.9 633.0,575.6 640.0,580.0" stroke="#f8e9bb" stroke-width="8" fill="none" stroke-linejoin="round"/>
<path d="M406.0,-5.0 C402.7,0.7 394.3,18.7 386.0,29.4 C377.7,40.1 367.3,49.7 356.0,59.0 C344.7,68.3 333.2,76.7 318.0,85.0 C302.8,93.3 283.7,97.7 265.0,109.0 C246.3,120.3 223.7,140.7 206.0,153.0 C188.3,165.3 171.7,172.8 159.0,182.6 C146.3,192.4 137.8,202.3 129.6,212.0 C121.4,221.7 116.9,232.2 110.0,241.0 C103.1,249.8 97.0,252.2 88.0,265.0 C79.0,277.8 64.3,305.5 56.0,318.0 C47.7,330.5 42.9,332.7 38.0,340.0 C33.1,347.3 29.4,351.0 26.5,362.0 C23.6,373.0 22.1,391.2 20.6,406.0 C19.1,420.8 17.7,435.7 17.7,450.5 C17.7,465.3 18.2,482.4 20.6,494.7 C23.1,506.9 26.0,514.7 32.4,524.0 C38.8,533.3 48.7,545.2 59.0,550.6 C69.3,556.0 83.2,557.5 94.0,556.5 C104.8,555.5 114.9,551.1 123.7,544.7 C132.5,538.3 140.1,528.3 147.0,518.0 C153.9,507.7 159.1,495.2 165.0,483.0 C170.9,470.8 175.8,457.4 182.6,444.6 C189.4,431.8 197.7,417.3 206.0,406.0 C214.3,394.7 222.8,386.8 232.6,377.0 C242.4,367.2 250.8,353.8 265.0,347.4 C279.2,341.0 304.3,339.1 318.0,338.6 C331.7,338.1 337.6,341.6 347.4,344.5 C357.2,347.4 365.7,351.6 377.0,356.0 C388.3,360.4 404.2,366.1 415.0,371.0 C425.8,375.9 431.9,379.3 441.7,385.7 C451.5,392.1 464.2,400.0 474.0,409.3 C483.8,418.6 491.3,430.9 500.6,441.7 C509.9,452.5 521.2,464.2 530.0,474.0 C538.8,483.8 545.8,491.3 553.6,500.6 C561.4,509.9 569.6,521.2 577.0,530.0 C584.4,538.8 587.2,545.3 597.7,553.6 C608.2,561.9 633.0,575.6 640.0,580.0" stroke="#cbdfe0" stroke-width="5.5" fill="none" stroke-linejoin="round"/>
<path d="M-5.0,60.0 C0.7,54.8 18.2,37.7 29.0,29.0 C39.8,20.3 51.2,13.7 60.0,8.0 C68.8,2.3 78.3,-2.8 82.0,-5.0" stroke="#f7e3a2" stroke-width="12" fill="none"/>
<path d="M-5.0,60.0 C0.7,54.8 18.2,37.7 29.0,29.0 C39.8,20.3 51.2,13.7 60.0,8.0 C68.8,2.3 78.3,-2.8 82.0,-5.0" stroke="#c3dbe3" stroke-width="8" fill="none"/>
<path d="M0.0,88.0 C2.9,83.2 10.9,67.8 17.7,59.0 C24.5,50.2 31.2,43.8 41.0,35.0 C50.8,26.2 69.8,11.8 76.6,6.0 C83.4,0.2 81.1,1.0 82.0,0.0" stroke="#f7e2a4" stroke-width="2.5" fill="none" stroke-linecap="round"/>
<path d="M6.0,50.0 C9.8,53.0 20.7,60.2 29.0,68.0 C37.3,75.8 49.0,87.7 56.0,97.0 C63.0,106.3 67.8,110.7 71.0,124.0 C74.2,137.3 74.1,162.3 75.0,177.0 C75.9,191.7 76.2,206.2 76.5,212.0" stroke="#f9ebc0" stroke-width="2.5" fill="none" stroke-linecap="round"/>
<path d="M0.0,132.5 C0.7,137.4 1.5,155.1 4.4,162.0 C7.3,168.9 8.6,169.6 17.7,174.0 C26.8,178.4 52.1,186.1 59.0,188.5" stroke="#f9ebc0" stroke-width="2.5" fill="none" stroke-linecap="round"/>
<path d="M123.7,224.0 C130.6,227.3 158.1,240.7 165.0,244.0" stroke="#f7e2a4" stroke-width="2.5" fill="none" stroke-linecap="round"/>
<path d="M224.0,0.0 C225.9,7.3 230.3,32.2 235.6,44.0 C240.9,55.8 242.3,63.4 256.0,70.7 C269.7,78.0 307.7,85.1 318.0,88.0" stroke="#f9ebc0" stroke-width="2.5" fill="none" stroke-linecap="round"/>
<path d="M282.7,0.0 C284.7,4.9 290.6,17.1 294.5,29.4 C298.4,41.7 302.1,64.3 306.0,73.6 C309.9,82.9 316.0,83.1 318.0,85.0" stroke="#f9ebc0" stroke-width="2.5" fill="none" stroke-linecap="round"/>
<path d="M0.0,229.7 C14.7,228.8 61.5,222.1 88.0,224.0 C114.5,225.9 147.2,238.2 159.0,241.0" stroke="#f9ebc0" stroke-width="2" fill="none" stroke-linecap="round"/>
<path d="M0.0,294.5 C9.8,289.6 38.4,271.9 59.0,265.0 C79.6,258.1 104.1,253.0 123.7,253.0 C143.3,253.0 167.9,263.0 176.7,265.0" stroke="#f9ebc0" stroke-width="2" fill="none" stroke-linecap="round"/>
<path d="M206.0,280.0 C208.0,274.5 210.5,258.3 218.0,247.0 C225.5,235.7 235.7,223.7 251.0,212.0 C266.3,200.3 293.7,186.8 310.0,177.0 C326.3,167.2 330.0,157.3 349.0,153.0 C368.0,148.7 404.7,151.2 424.0,151.0 C443.3,150.8 440.9,151.3 465.0,151.6 C489.1,151.9 547.6,151.5 568.3,153.0 C589.0,154.5 584.1,154.6 589.0,160.5 C593.9,166.4 595.9,175.2 597.7,188.5 C599.5,201.8 599.3,216.4 600.0,240.0 C600.7,263.6 601.2,300.0 602.0,330.0 C602.8,360.0 603.3,400.0 605.0,420.0 C606.7,440.0 612.8,433.3 612.0,450.0 C611.2,466.7 604.8,506.7 600.0,520.0 C595.2,533.3 595.7,522.5 583.0,530.0 C570.3,537.5 543.7,556.7 524.0,565.0 C504.3,573.3 484.7,579.0 465.0,580.0 C445.3,581.0 430.5,575.5 406.0,571.0 C381.5,566.5 344.0,560.8 318.0,553.0 C292.0,545.2 268.7,532.7 250.0,524.0 C231.3,515.3 224.7,507.3 206.0,501.0 C187.3,494.7 149.3,488.5 138.0,486.0" stroke="#f7e2a4" stroke-width="3" fill="none" stroke-linecap="round"/>
<path d="M362.0,3.0 C371.8,8.8 394.0,30.7 421.0,38.0 C448.0,45.3 492.1,49.4 524.0,47.0 C555.9,44.6 593.8,28.5 612.5,23.6 C631.2,18.7 632.1,18.7 636.0,17.7" stroke="#f7e2a4" stroke-width="4" fill="none" stroke-linecap="round"/>
<path d="M415.0,0.0 C416.0,6.3 419.0,23.3 421.0,38.0 C423.0,52.7 426.0,69.8 427.0,88.0 C428.0,106.2 427.0,137.2 427.0,147.0" stroke="#f9ebc0" stroke-width="2.5" fill="none" stroke-linecap="round"/>
<path d="M468.0,23.5 C468.5,34.2 470.2,66.9 471.0,88.0 C471.8,109.1 472.1,129.3 472.6,150.0 C473.1,170.7 473.8,201.7 474.0,212.0" stroke="#f7e2a4" stroke-width="2.5" fill="none" stroke-linecap="round"/>
<path d="M636.0,67.7 C624.7,80.9 586.7,121.0 568.0,147.0 C549.3,173.1 531.3,211.2 524.0,224.0" stroke="#f9ebc0" stroke-width="2" fill="none" stroke-linecap="round"/>
<path d="M636.0,191.0 C617.3,198.4 550.5,224.3 524.0,235.6 C497.5,246.9 484.8,255.1 477.0,259.0" stroke="#f9ebc0" stroke-width="2" fill="none" stroke-linecap="round"/>
<path d="M0.0,418.0 C5.8,418.3 14.4,419.1 35.0,419.6 C55.6,420.1 102.0,423.3 123.7,421.0 C145.4,418.7 158.1,408.5 165.0,406.0" stroke="#f9ebc0" stroke-width="2.5" fill="none" stroke-linecap="round"/>
<path d="M23.6,509.0 C34.3,507.6 68.4,501.0 88.0,500.6 C107.6,500.2 121.3,502.6 141.0,506.5 C160.7,510.4 195.2,521.1 206.0,524.0" stroke="#f9ebc0" stroke-width="2.5" fill="none" stroke-linecap="round"/>
<path d="M117.8,583.0 C127.6,579.1 152.2,567.3 176.7,559.5 C201.2,551.7 241.4,541.9 265.0,536.0 C288.6,530.1 309.2,526.0 318.0,524.0" stroke="#f7e2a4" stroke-width="2.5" fill="none" stroke-linecap="round"/>
<path d="M123.7,421.0 C123.7,429.3 123.7,462.7 123.7,471.0" stroke="#f9ebc0" stroke-width="2" fill="none" stroke-linecap="round"/>
<path d="M79.5,318.0 C80.9,325.3 88.0,345.8 88.0,362.0 C88.0,378.2 80.9,406.2 79.5,415.0" stroke="#f9ebc0" stroke-width="2" fill="none" stroke-linecap="round"/>
<path d="M391.6,583.0 C394.0,591.8 403.6,627.2 406.0,636.0" stroke="#f7e2a4" stroke-width="2.5" fill="none" stroke-linecap="round"/>
<path d="M471.0,577.0 C474.0,586.8 486.0,626.2 489.0,636.0" stroke="#f9ebc0" stroke-width="2.5" fill="none" stroke-linecap="round"/>
<path d="M559.5,318.0 C561.9,327.8 567.1,362.3 574.0,377.0 C580.9,391.7 594.3,393.8 600.7,406.0 C607.1,418.2 610.5,443.1 612.5,450.5" stroke="#f9ebc0" stroke-width="2.5" fill="none" stroke-linecap="round"/>
<path d="M0.0,520.0 C3.3,533.3 10.0,580.5 20.0,600.0 C30.0,619.5 53.3,630.8 60.0,637.0" stroke="#f9ebc0" stroke-width="2" fill="none" stroke-linecap="round"/>
<path d="M60.0,292.0 C66.7,298.3 85.0,321.2 100.0,330.0 C115.0,338.8 141.7,342.5 150.0,345.0" stroke="#f9ebc0" stroke-width="2" fill="none" stroke-linecap="round"/>
<path d="M36.0,380.0 C45.0,376.7 67.7,373.3 90.0,360.0 C112.3,346.7 156.7,310.0 170.0,300.0" stroke="#f9ebc0" stroke-width="2" fill="none" stroke-linecap="round"/>
<path d="M110.0,270.0 C109.2,280.0 107.5,305.8 105.0,330.0 C102.5,354.2 96.7,400.8 95.0,415.0" stroke="#f9ebc0" stroke-width="2" fill="none" stroke-linecap="round"/>
<path d="M150.0,637.0 C158.3,630.8 181.7,607.8 200.0,600.0 C218.3,592.2 250.0,591.7 260.0,590.0" stroke="#f9ebc0" stroke-width="2" fill="none" stroke-linecap="round"/>
<path d="M540.0,637.0 C546.7,630.8 564.0,609.5 580.0,600.0 C596.0,590.5 626.7,583.3 636.0,580.0" stroke="#f9ebc0" stroke-width="2" fill="none" stroke-linecap="round"/>
<clipPath id="colc"><rect x="95" y="38.6" width="60" height="3.0"/></clipPath>
<text x="103" y="44.1" font-size="7.5" font-family="Liberation Sans" font-weight="bold" fill="#4f5c74" textLength="37" clip-path="url(#colc)">Colombes</text>
<text x="528" y="84.5" font-size="7.8" font-family="Liberation Sans" font-weight="bold" fill="#4f5c74" textLength="47">Aubervilliers</text>
<text x="12.8" y="488.5" font-size="9" font-family="Liberation Sans" font-weight="bold" fill="#4f5c74" textLength="122.7">BOULOGNE-BILLANCOURT</text>
<text x="186" y="538.8" font-size="7" text-anchor="middle" font-family="Liberation Sans" font-weight="bold" fill="#4f5c74">Issy-les-</text>
<text x="186" y="546.5" font-size="7" text-anchor="middle" font-family="Liberation Sans" font-weight="bold" fill="#4f5c74">Moulineaux</text>
<text x="405" y="154" font-family="Liberation Sans" fill="#8c8478" font-size="4.5">Boulevard Périphérique Intérieur</text>
<text x="300" y="551" font-family="Liberation Sans" fill="#8c8478" font-size="4.5" transform="rotate(20 300 551)">Boulevard Périphérique Intérieur</text>
<g fill="#1273e8" stroke="#b3d5f8" stroke-width="1.5"><circle cx="488.8" cy="362.1" r="5.9"/><circle cx="456.4" cy="487.8" r="5.9"/><circle cx="227.2" cy="460.8" r="5.9"/><circle cx="465.2" cy="280.7" r="5.9"/><circle cx="408.3" cy="339.6" r="5.9"/><circle cx="268.9" cy="302.3" r="5.9"/><circle cx="415.4" cy="268.8" r="5.9"/><circle cx="270.9" cy="220.8" r="5.9"/><circle cx="377.1" cy="176.4" r="5.9"/><circle cx="168.5" cy="431.3" r="5.9"/><circle cx="143.3" cy="418.1" r="5.9"/><circle cx="197.8" cy="409.4" r="5.9"/><circle cx="259.1" cy="249.3" r="5.9"/><circle cx="534.8" cy="407.6" r="5.9"/><circle cx="390.6" cy="522.1" r="5.9"/><circle cx="403.9" cy="189.9" r="5.9"/><circle cx="353.3" cy="412.2" r="5.9"/><circle cx="286.6" cy="373.0" r="5.9"/><circle cx="249.3" cy="265.0" r="5.9"/><circle cx="337.6" cy="510.4" r="5.9"/><circle cx="397.0" cy="512.8" r="5.9"/><circle cx="438.5" cy="294.7" r="5.9"/><circle cx="366.6" cy="209.1" r="5.9"/><circle cx="414.0" cy="253.5" r="5.9"/><circle cx="410.3" cy="184.5" r="5.9"/><circle cx="223.5" cy="330.1" r="5.9"/><circle cx="283.6" cy="254.2" r="5.9"/><circle cx="349.4" cy="494.7" r="5.9"/><circle cx="354.0" cy="504.4" r="5.9"/><circle cx="479.0" cy="337.6" r="5.9"/><circle cx="418.1" cy="237.5" r="5.9"/><circle cx="328.8" cy="295.4" r="5.9"/><circle cx="228.7" cy="499.6" r="5.9"/><circle cx="268.5" cy="287.4" r="5.9"/><circle cx="523.1" cy="193.4" r="5.9"/><circle cx="169.4" cy="423.7" r="5.9"/><circle cx="161.0" cy="394.6" r="5.9"/><circle cx="512.2" cy="418.0" r="5.9"/><circle cx="465.2" cy="299.4" r="5.9"/><circle cx="539.8" cy="431.9" r="5.9"/><circle cx="383.6" cy="384.3" r="5.9"/><circle cx="365.1" cy="169.2" r="5.9"/><circle cx="428.9" cy="331.3" r="5.9"/><circle cx="450.5" cy="544.7" r="5.9"/><circle cx="239.5" cy="450.5" r="5.9"/><circle cx="337.6" cy="214.0" r="5.9"/><circle cx="420.2" cy="352.0" r="5.9"/><circle cx="399.3" cy="235.6" r="5.9"/><circle cx="432.3" cy="415.9" r="5.9"/><circle cx="511.2" cy="334.4" r="5.9"/><circle cx="255.2" cy="473.1" r="5.9"/><circle cx="223.8" cy="418.1" r="5.9"/><circle cx="467.2" cy="463.3" r="5.9"/><circle cx="469.1" cy="265.0" r="5.9"/><circle cx="522.1" cy="338.6" r="5.9"/><circle cx="430.9" cy="445.0" r="5.9"/><circle cx="283.6" cy="205.1" r="5.9"/><circle cx="407.9" cy="443.9" r="5.9"/><circle cx="233.5" cy="414.1" r="5.9"/><circle cx="225.7" cy="427.9" r="5.9"/><circle cx="390.8" cy="271.6" r="5.9"/><circle cx="351.4" cy="376.9" r="5.9"/><circle cx="503.5" cy="235.6" r="5.9"/><circle cx="363.4" cy="178.4" r="5.9"/><circle cx="471.1" cy="394.6" r="5.9"/><circle cx="343.4" cy="288.1" r="5.9"/><circle cx="543.7" cy="290.5" r="5.9"/><circle cx="508.4" cy="308.2" r="5.9"/><circle cx="310.1" cy="237.5" r="5.9"/><circle cx="518.2" cy="266.0" r="5.9"/><circle cx="384.7" cy="267.0" r="5.9"/><circle cx="330.0" cy="507.8" r="5.9"/><circle cx="374.9" cy="259.1" r="5.9"/><circle cx="443.6" cy="353.3" r="5.9"/><circle cx="349.4" cy="398.5" r="5.9"/><circle cx="203.2" cy="288.2" r="5.9"/><circle cx="262.1" cy="304.3" r="5.9"/><circle cx="420.1" cy="259.1" r="5.9"/><circle cx="284.4" cy="451.9" r="5.9"/><circle cx="505.2" cy="379.8" r="5.9"/><circle cx="409.6" cy="225.5" r="5.9"/><circle cx="457.4" cy="365.1" r="5.9"/><circle cx="440.7" cy="330.8" r="5.9"/><circle cx="286.6" cy="270.9" r="5.9"/><circle cx="302.3" cy="513.3" r="5.9"/><circle cx="545.7" cy="345.5" r="5.9"/><circle cx="250.3" cy="407.4" r="5.9"/><circle cx="475.0" cy="486.8" r="5.9"/><circle cx="206.1" cy="379.8" r="5.9"/><circle cx="441.5" cy="443.4" r="5.9"/><circle cx="201.2" cy="336.6" r="5.9"/><circle cx="434.8" cy="302.3" r="5.9"/><circle cx="367.1" cy="540.8" r="5.9"/><circle cx="207.1" cy="389.6" r="5.9"/><circle cx="355.3" cy="518.2" r="5.9"/><circle cx="347.4" cy="359.2" r="5.9"/><circle cx="398.0" cy="215.3" r="5.9"/><circle cx="145.3" cy="461.3" r="5.9"/><circle cx="278.7" cy="453.4" r="5.9"/><circle cx="458.6" cy="263.8" r="5.9"/><circle cx="414.5" cy="415.7" r="5.9"/><circle cx="468.6" cy="478.2" r="5.9"/><circle cx="294.4" cy="494.7" r="5.9"/><circle cx="256.2" cy="389.6" r="5.9"/><circle cx="327.8" cy="504.5" r="5.9"/><circle cx="280.7" cy="418.1" r="5.9"/><circle cx="506.4" cy="256.2" r="5.9"/><circle cx="378.9" cy="398.5" r="5.9"/><circle cx="516.0" cy="408.9" r="5.9"/><circle cx="371.8" cy="494.1" r="5.9"/><circle cx="210.3" cy="462.6" r="5.9"/><circle cx="284.6" cy="323.9" r="5.9"/><circle cx="436.9" cy="333.0" r="5.9"/><circle cx="461.5" cy="203.5" r="5.9"/><circle cx="331.7" cy="443.6" r="5.9"/><circle cx="242.4" cy="329.8" r="5.9"/><circle cx="406.3" cy="408.3" r="5.9"/><circle cx="389.5" cy="512.9" r="5.9"/><circle cx="414.2" cy="434.8" r="5.9"/><circle cx="404.4" cy="175.7" r="5.9"/><circle cx="423.6" cy="404.9" r="5.9"/><circle cx="193.4" cy="371.0" r="5.9"/><circle cx="345.5" cy="216.9" r="5.9"/><circle cx="252.4" cy="241.6" r="5.9"/><circle cx="306.2" cy="490.7" r="5.9"/><circle cx="431.9" cy="365.1" r="5.9"/><circle cx="331.4" cy="241.1" r="5.9"/><circle cx="215.9" cy="450.5" r="5.9"/><circle cx="346.1" cy="181.6" r="5.9"/><circle cx="191.4" cy="230.1" r="5.9"/><circle cx="357.3" cy="214.0" r="5.9"/><circle cx="225.2" cy="453.2" r="5.9"/><circle cx="169.0" cy="372.4" r="5.9"/><circle cx="459.3" cy="414.2" r="5.9"/><circle cx="252.7" cy="419.7" r="5.9"/><circle cx="204.1" cy="319.0" r="5.9"/><circle cx="235.6" cy="433.8" r="5.9"/><circle cx="429.9" cy="333.7" r="5.9"/><circle cx="331.7" cy="401.4" r="5.9"/><circle cx="388.7" cy="243.4" r="5.9"/><circle cx="93.8" cy="156.1" r="5.9"/><circle cx="167.8" cy="98.1" r="5.9"/><circle cx="361.2" cy="484.8" r="5.9"/><circle cx="416.1" cy="496.6" r="5.9"/><circle cx="441.7" cy="339.6" r="5.9"/><circle cx="445.6" cy="389.6" r="5.9"/><circle cx="327.8" cy="524.1" r="5.9"/><circle cx="378.9" cy="548.6" r="5.9"/><circle cx="480.9" cy="462.3" r="5.9"/><circle cx="326.2" cy="516.3" r="5.9"/><circle cx="494.7" cy="252.2" r="5.9"/><circle cx="500.6" cy="226.7" r="5.9"/><circle cx="239.5" cy="427.9" r="5.9"/><circle cx="490.0" cy="347.9" r="5.9"/><circle cx="467.0" cy="342.5" r="5.9"/><circle cx="354.7" cy="199.8" r="5.9"/><circle cx="466.7" cy="263.9" r="5.9"/><circle cx="353.8" cy="223.9" r="5.9"/><circle cx="318.6" cy="521.1" r="5.9"/><circle cx="204.1" cy="438.7" r="5.9"/><circle cx="205.4" cy="310.9" r="5.9"/><circle cx="265.0" cy="420.1" r="5.9"/><circle cx="300.3" cy="527.1" r="5.9"/><circle cx="505.5" cy="364.1" r="5.9"/><circle cx="352.4" cy="175.7" r="5.9"/><circle cx="459.3" cy="400.4" r="5.9"/><circle cx="317.6" cy="301.7" r="5.9"/><circle cx="245.8" cy="292.5" r="5.9"/><circle cx="444.9" cy="505.8" r="5.9"/><circle cx="197.4" cy="418.0" r="5.9"/><circle cx="372.0" cy="247.0" r="5.9"/><circle cx="240.0" cy="276.1" r="5.9"/><circle cx="270.9" cy="435.8" r="5.9"/><circle cx="382.8" cy="235.6" r="5.9"/><circle cx="274.0" cy="259.3" r="5.9"/><circle cx="294.1" cy="228.4" r="5.9"/><circle cx="323.9" cy="236.5" r="5.9"/><circle cx="237.1" cy="429.5" r="5.9"/><circle cx="389.6" cy="185.5" r="5.9"/><circle cx="302.3" cy="302.3" r="5.9"/><circle cx="505.8" cy="355.3" r="5.9"/><circle cx="180.6" cy="432.8" r="5.9"/><circle cx="511.3" cy="242.0" r="5.9"/><circle cx="146.2" cy="476.0" r="5.9"/><circle cx="184.5" cy="411.2" r="5.9"/><circle cx="498.5" cy="304.6" r="5.9"/><circle cx="210.6" cy="354.6" r="5.9"/><circle cx="421.1" cy="177.6" r="5.9"/><circle cx="220.8" cy="472.0" r="5.9"/><circle cx="267.0" cy="291.5" r="5.9"/><circle cx="299.4" cy="514.1" r="5.9"/><circle cx="424.8" cy="187.7" r="5.9"/><circle cx="450.5" cy="454.4" r="5.9"/><circle cx="212.5" cy="326.6" r="5.9"/><circle cx="170.8" cy="386.6" r="5.9"/><circle cx="181.0" cy="365.6" r="5.9"/><circle cx="305.8" cy="357.1" r="5.9"/><circle cx="304.3" cy="361.2" r="5.9"/><circle cx="207.1" cy="477.0" r="5.9"/><circle cx="346.9" cy="219.8" r="5.9"/><circle cx="337.4" cy="457.2" r="5.9"/><circle cx="276.8" cy="410.3" r="5.9"/><circle cx="205.5" cy="339.2" r="5.9"/><circle cx="406.2" cy="210.3" r="5.9"/><circle cx="418.1" cy="475.0" r="5.9"/><circle cx="314.1" cy="241.4" r="5.9"/><circle cx="318.8" cy="484.1" r="5.9"/><circle cx="334.4" cy="271.6" r="5.9"/><circle cx="184.1" cy="320.9" r="5.9"/><circle cx="241.4" cy="497.6" r="5.9"/><circle cx="371.0" cy="404.4" r="5.9"/><circle cx="295.8" cy="481.5" r="5.9"/><circle cx="239.4" cy="487.7" r="5.9"/><circle cx="227.2" cy="431.0" r="5.9"/><circle cx="162.7" cy="385.5" r="5.9"/><circle cx="321.9" cy="496.6" r="5.9"/><circle cx="444.6" cy="373.9" r="5.9"/><circle cx="434.8" cy="194.3" r="5.9"/><circle cx="324.9" cy="312.1" r="5.9"/><circle cx="435.8" cy="320.0" r="5.9"/><circle cx="342.0" cy="507.4" r="5.9"/><circle cx="367.1" cy="298.4" r="5.9"/><circle cx="523.8" cy="431.3" r="5.9"/><circle cx="408.3" cy="197.3" r="5.9"/><circle cx="312.1" cy="504.5" r="5.9"/><circle cx="493.1" cy="270.2" r="5.9"/><circle cx="528.0" cy="298.4" r="5.9"/><circle cx="503.8" cy="263.4" r="5.9"/><circle cx="183.8" cy="352.4" r="5.9"/><circle cx="532.0" cy="426.0" r="5.9"/><circle cx="420.1" cy="294.4" r="5.9"/><circle cx="373.2" cy="517.0" r="5.9"/><circle cx="441.7" cy="447.6" r="5.9"/><circle cx="363.1" cy="506.4" r="5.9"/><circle cx="235.6" cy="470.1" r="5.9"/><circle cx="166.5" cy="182.2" r="5.9"/><circle cx="475.0" cy="363.1" r="5.9"/><circle cx="216.2" cy="327.2" r="5.9"/><circle cx="410.3" cy="282.7" r="5.9"/><circle cx="534.9" cy="203.7" r="5.9"/><circle cx="459.3" cy="432.8" r="5.9"/><circle cx="269.1" cy="480.3" r="5.9"/><circle cx="451.5" cy="428.9" r="5.9"/><circle cx="294.4" cy="357.3" r="5.9"/><circle cx="183.5" cy="373.0" r="5.9"/><circle cx="516.3" cy="396.5" r="5.9"/><circle cx="453.4" cy="349.4" r="5.9"/><circle cx="198.4" cy="333.7" r="5.9"/><circle cx="511.4" cy="342.4" r="5.9"/><circle cx="286.6" cy="493.1" r="5.9"/><circle cx="153.4" cy="462.1" r="5.9"/><circle cx="426.9" cy="239.2" r="5.9"/><circle cx="244.1" cy="301.4" r="5.9"/><circle cx="346.5" cy="276.8" r="5.9"/><circle cx="353.3" cy="237.5" r="5.9"/><circle cx="234.8" cy="299.8" r="5.9"/><circle cx="332.8" cy="500.7" r="5.9"/><circle cx="351.7" cy="498.0" r="5.9"/><circle cx="172.3" cy="221.4" r="5.9"/><circle cx="104.0" cy="107.6" r="5.9"/><circle cx="506.4" cy="278.7" r="5.9"/><circle cx="335.7" cy="370.0" r="5.9"/><circle cx="262.7" cy="241.3" r="5.9"/><circle cx="494.7" cy="414.2" r="5.9"/><circle cx="353.3" cy="463.3" r="5.9"/><circle cx="547.7" cy="378.9" r="5.9"/><circle cx="460.0" cy="455.4" r="5.9"/><circle cx="226.7" cy="444.7" r="5.9"/><circle cx="197.9" cy="350.6" r="5.9"/><circle cx="183.3" cy="422.5" r="5.9"/><circle cx="479.7" cy="265.3" r="5.9"/><circle cx="327.8" cy="490.7" r="5.9"/><circle cx="333.7" cy="310.1" r="5.9"/><circle cx="181.4" cy="335.5" r="5.9"/><circle cx="502.5" cy="341.6" r="5.9"/><circle cx="270.9" cy="259.1" r="5.9"/><circle cx="296.4" cy="373.9" r="5.9"/><circle cx="319.0" cy="268.9" r="5.9"/><circle cx="328.1" cy="486.6" r="5.9"/><circle cx="161.0" cy="444.6" r="5.9"/><circle cx="240.7" cy="462.4" r="5.9"/><circle cx="216.7" cy="313.2" r="5.9"/><circle cx="276.3" cy="210.2" r="5.9"/><circle cx="181.6" cy="361.2" r="5.9"/><circle cx="286.3" cy="205.4" r="5.9"/><circle cx="551.6" cy="395.5" r="5.9"/><circle cx="535.9" cy="334.7" r="5.9"/><circle cx="349.4" cy="307.2" r="5.9"/><circle cx="247.3" cy="410.3" r="5.9"/><circle cx="298.4" cy="349.4" r="5.9"/><circle cx="531.0" cy="212.0" r="5.9"/><circle cx="490.7" cy="392.6" r="5.9"/><circle cx="310.1" cy="447.6" r="5.9"/><circle cx="548.6" cy="297.4" r="5.9"/><circle cx="320.4" cy="451.4" r="5.9"/><circle cx="402.4" cy="267.9" r="5.9"/><circle cx="348.5" cy="421.9" r="5.9"/><circle cx="442.1" cy="482.2" r="5.9"/><circle cx="326.9" cy="241.3" r="5.9"/><circle cx="505.8" cy="306.9" r="5.9"/><circle cx="491.6" cy="226.2" r="5.9"/><circle cx="453.4" cy="410.3" r="5.9"/><circle cx="190.9" cy="362.3" r="5.9"/><circle cx="321.9" cy="530.0" r="5.9"/><circle cx="280.7" cy="356.3" r="5.9"/><circle cx="507.3" cy="305.1" r="5.9"/><circle cx="288.6" cy="208.1" r="5.9"/><circle cx="524.1" cy="350.4" r="5.9"/><circle cx="392.6" cy="535.9" r="5.9"/><circle cx="490.5" cy="402.6" r="5.9"/><circle cx="426.5" cy="426.4" r="5.9"/><circle cx="364.1" cy="287.5" r="5.9"/><circle cx="444.6" cy="485.8" r="5.9"/><circle cx="323.9" cy="463.3" r="5.9"/><circle cx="355.1" cy="504.1" r="5.9"/><circle cx="473.1" cy="404.4" r="5.9"/><circle cx="378.9" cy="455.4" r="5.9"/><circle cx="275.9" cy="451.4" r="5.9"/><circle cx="360.1" cy="259.9" r="5.9"/><circle cx="353.3" cy="429.9" r="5.9"/><circle cx="290.5" cy="468.2" r="5.9"/><circle cx="335.7" cy="231.6" r="5.9"/><circle cx="412.2" cy="509.4" r="5.9"/><circle cx="286.6" cy="213.0" r="5.9"/><circle cx="546.7" cy="281.7" r="5.9"/><circle cx="308.2" cy="523.1" r="5.9"/><circle cx="453.4" cy="292.5" r="5.9"/><circle cx="228.7" cy="121.3" r="5.9"/><circle cx="158.0" cy="367.5" r="5.9"/><circle cx="532.0" cy="283.8" r="5.9"/><circle cx="376.9" cy="540.8" r="5.9"/><circle cx="539.8" cy="419.1" r="5.9"/><circle cx="349.4" cy="453.4" r="5.9"/><circle cx="177.6" cy="385.7" r="5.9"/><circle cx="355.3" cy="284.6" r="5.9"/><circle cx="537.9" cy="355.3" r="5.9"/><circle cx="545.7" cy="353.3" r="5.9"/><circle cx="406.2" cy="195.4" r="5.9"/><circle cx="229.7" cy="460.3" r="5.9"/><circle cx="513.5" cy="318.5" r="5.9"/><circle cx="474.1" cy="311.1" r="5.9"/><circle cx="270.9" cy="396.5" r="5.9"/><circle cx="442.6" cy="229.9" r="5.9"/><circle cx="325.9" cy="245.4" r="5.9"/><circle cx="471.4" cy="398.5" r="5.9"/><circle cx="313.1" cy="309.2" r="5.9"/><circle cx="441.7" cy="367.1" r="5.9"/><circle cx="440.7" cy="496.6" r="5.9"/><circle cx="235.6" cy="285.6" r="5.9"/><circle cx="375.7" cy="386.9" r="5.9"/><circle cx="420.1" cy="281.9" r="5.9"/><circle cx="318.0" cy="233.5" r="5.9"/><circle cx="353.3" cy="480.9" r="5.9"/><circle cx="541.8" cy="420.7" r="5.9"/><circle cx="294.0" cy="335.1" r="5.9"/><circle cx="431.9" cy="554.5" r="5.9"/><circle cx="198.3" cy="353.3" r="5.9"/><circle cx="498.0" cy="251.1" r="5.9"/><circle cx="288.6" cy="432.8" r="5.9"/><circle cx="230.6" cy="268.9" r="5.9"/><circle cx="210.0" cy="337.6" r="5.9"/><circle cx="479.9" cy="201.2" r="5.9"/><circle cx="463.3" cy="357.3" r="5.9"/><circle cx="250.8" cy="427.4" r="5.9"/><circle cx="470.9" cy="267.2" r="5.9"/><circle cx="208.2" cy="317.9" r="5.9"/><circle cx="399.5" cy="190.4" r="5.9"/><circle cx="347.6" cy="206.7" r="5.9"/><circle cx="304.3" cy="212.0" r="5.9"/><circle cx="514.8" cy="383.8" r="5.9"/><circle cx="245.4" cy="369.0" r="5.9"/><circle cx="241.4" cy="261.1" r="5.9"/><circle cx="387.9" cy="519.2" r="5.9"/><circle cx="416.1" cy="204.1" r="5.9"/><circle cx="290.9" cy="358.5" r="5.9"/><circle cx="198.1" cy="348.9" r="5.9"/><circle cx="390.6" cy="202.2" r="5.9"/><circle cx="306.2" cy="465.2" r="5.9"/><circle cx="288.0" cy="342.7" r="5.9"/><circle cx="296.4" cy="236.5" r="5.9"/><circle cx="385.2" cy="409.2" r="5.9"/><circle cx="420.1" cy="329.8" r="5.9"/><circle cx="506.5" cy="296.3" r="5.9"/><circle cx="426.9" cy="490.7" r="5.9"/><circle cx="482.9" cy="383.8" r="5.9"/><circle cx="337.8" cy="520.9" r="5.9"/><circle cx="517.5" cy="355.2" r="5.9"/><circle cx="260.1" cy="265.0" r="5.9"/><circle cx="222.8" cy="483.9" r="5.9"/><circle cx="420.1" cy="217.9" r="5.9"/><circle cx="365.1" cy="367.1" r="5.9"/><circle cx="369.0" cy="486.8" r="5.9"/><circle cx="373.1" cy="269.8" r="5.9"/><circle cx="282.7" cy="329.8" r="5.9"/><circle cx="443.6" cy="257.1" r="5.9"/><circle cx="329.8" cy="514.3" r="5.9"/><circle cx="306.8" cy="498.3" r="5.9"/><circle cx="411.7" cy="180.9" r="5.9"/><circle cx="468.7" cy="212.5" r="5.9"/><circle cx="463.6" cy="400.4" r="5.9"/><circle cx="502.5" cy="280.7" r="5.9"/><circle cx="402.4" cy="251.3" r="5.9"/><circle cx="427.9" cy="276.8" r="5.9"/><circle cx="416.1" cy="243.4" r="5.9"/><circle cx="310.7" cy="221.4" r="5.9"/><circle cx="335.7" cy="281.7" r="5.9"/><circle cx="484.9" cy="251.3" r="5.9"/><circle cx="359.2" cy="246.4" r="5.9"/><circle cx="412.3" cy="244.9" r="5.9"/><circle cx="435.8" cy="425.1" r="5.9"/><circle cx="432.2" cy="232.1" r="5.9"/><circle cx="353.3" cy="471.1" r="5.9"/><circle cx="535.9" cy="410.3" r="5.9"/><circle cx="386.7" cy="510.4" r="5.9"/><circle cx="361.2" cy="453.4" r="5.9"/><circle cx="337.6" cy="418.1" r="5.9"/><circle cx="112.3" cy="100.1" r="5.9"/><circle cx="425.8" cy="508.4" r="5.9"/><circle cx="426.9" cy="550.6" r="5.9"/><circle cx="261.0" cy="300.0" r="5.9"/><circle cx="492.7" cy="347.4" r="5.9"/><circle cx="172.7" cy="391.6" r="5.9"/><circle cx="427.9" cy="257.1" r="5.9"/><circle cx="358.3" cy="364.5" r="5.9"/><circle cx="278.7" cy="368.1" r="5.9"/><circle cx="510.4" cy="302.3" r="5.9"/><circle cx="288.6" cy="280.7" r="5.9"/><circle cx="452.9" cy="288.7" r="5.9"/><circle cx="339.6" cy="186.5" r="5.9"/><circle cx="477.0" cy="468.2" r="5.9"/><circle cx="208.6" cy="383.4" r="5.9"/><circle cx="261.1" cy="229.7" r="5.9"/><circle cx="467.5" cy="460.4" r="5.9"/><circle cx="351.4" cy="241.6" r="5.9"/><circle cx="376.1" cy="184.5" r="5.9"/><circle cx="265.0" cy="308.2" r="5.9"/><circle cx="270.9" cy="319.0" r="5.9"/><circle cx="460.5" cy="416.9" r="5.9"/><circle cx="394.6" cy="510.4" r="5.9"/><circle cx="378.9" cy="287.6" r="5.9"/><circle cx="378.9" cy="374.9" r="5.9"/><circle cx="227.7" cy="453.4" r="5.9"/><circle cx="337.6" cy="518.2" r="5.9"/><circle cx="190.8" cy="369.5" r="5.9"/><circle cx="221.7" cy="347.9" r="5.9"/><circle cx="193.0" cy="111.9" r="5.9"/><circle cx="378.9" cy="510.4" r="5.9"/><circle cx="422.0" cy="408.3" r="5.9"/><circle cx="517.2" cy="252.2" r="5.9"/><circle cx="486.8" cy="193.4" r="5.9"/><circle cx="335.7" cy="395.5" r="5.9"/><circle cx="222.8" cy="475.0" r="5.9"/><circle cx="182.1" cy="412.5" r="5.9"/><circle cx="435.8" cy="545.7" r="5.9"/><circle cx="442.6" cy="245.4" r="5.9"/><circle cx="465.2" cy="371.0" r="5.9"/><circle cx="420.1" cy="400.4" r="5.9"/><circle cx="284.6" cy="520.2" r="5.9"/><circle cx="475.8" cy="373.7" r="5.9"/><circle cx="387.9" cy="514.4" r="5.9"/><circle cx="428.9" cy="179.4" r="5.9"/><circle cx="298.4" cy="445.6" r="5.9"/><circle cx="471.1" cy="503.5" r="5.9"/><circle cx="349.4" cy="265.0" r="5.9"/><circle cx="416.1" cy="418.1" r="5.9"/><circle cx="361.2" cy="392.6" r="5.9"/><circle cx="280.8" cy="278.0" r="5.9"/><circle cx="363.5" cy="246.2" r="5.9"/><circle cx="365.1" cy="221.8" r="5.9"/><circle cx="482.9" cy="369.0" r="5.9"/><circle cx="239.5" cy="404.4" r="5.9"/><circle cx="380.8" cy="176.7" r="5.9"/><circle cx="419.7" cy="456.6" r="5.9"/><circle cx="414.2" cy="345.5" r="5.9"/><circle cx="437.7" cy="408.3" r="5.9"/><circle cx="390.7" cy="529.1" r="5.9"/><circle cx="400.4" cy="446.6" r="5.9"/><circle cx="461.0" cy="360.2" r="5.9"/><circle cx="372.9" cy="239.0" r="5.9"/><circle cx="518.2" cy="369.0" r="5.9"/><circle cx="394.6" cy="410.3" r="5.9"/><circle cx="251.3" cy="231.6" r="5.9"/><circle cx="181.8" cy="107.2" r="5.9"/><circle cx="512.3" cy="321.9" r="5.9"/><circle cx="298.4" cy="217.9" r="5.9"/><circle cx="490.6" cy="335.0" r="5.9"/><circle cx="361.2" cy="547.7" r="5.9"/><circle cx="367.1" cy="493.7" r="5.9"/><circle cx="189.4" cy="345.5" r="5.9"/><circle cx="264.6" cy="457.4" r="5.9"/><circle cx="321.9" cy="222.8" r="5.9"/><circle cx="234.0" cy="442.7" r="5.9"/><circle cx="526.3" cy="396.5" r="5.9"/><circle cx="246.4" cy="312.1" r="5.9"/><circle cx="424.0" cy="237.5" r="5.9"/><circle cx="461.4" cy="550.4" r="5.9"/><circle cx="301.8" cy="443.0" r="5.9"/><circle cx="191.8" cy="325.7" r="5.9"/><circle cx="361.2" cy="418.1" r="5.9"/><circle cx="380.8" cy="216.9" r="5.9"/><circle cx="155.1" cy="416.1" r="5.9"/><circle cx="514.3" cy="308.2" r="5.9"/><circle cx="153.1" cy="465.2" r="5.9"/><circle cx="376.8" cy="527.9" r="5.9"/><circle cx="494.2" cy="395.0" r="5.9"/><circle cx="300.6" cy="214.9" r="5.9"/><circle cx="441.7" cy="418.1" r="5.9"/><circle cx="341.0" cy="402.9" r="5.9"/><circle cx="459.3" cy="267.9" r="5.9"/><circle cx="320.0" cy="455.4" r="5.9"/><circle cx="317.8" cy="256.6" r="5.9"/><circle cx="367.1" cy="178.6" r="5.9"/><circle cx="304.3" cy="420.1" r="5.9"/><circle cx="182.8" cy="375.5" r="5.9"/><circle cx="494.7" cy="280.7" r="5.9"/><circle cx="498.6" cy="318.0" r="5.9"/><circle cx="214.9" cy="325.9" r="5.9"/><circle cx="431.9" cy="461.3" r="5.9"/><circle cx="347.3" cy="245.7" r="5.9"/><circle cx="496.6" cy="240.5" r="5.9"/><circle cx="480.9" cy="397.5" r="5.9"/><circle cx="539.8" cy="389.6" r="5.9"/><circle cx="270.9" cy="447.6" r="5.9"/><circle cx="251.3" cy="496.6" r="5.9"/><circle cx="424.9" cy="551.7" r="5.9"/><circle cx="388.7" cy="239.5" r="5.9"/><circle cx="420.1" cy="448.5" r="5.9"/><circle cx="347.4" cy="204.1" r="5.9"/><circle cx="181.6" cy="350.4" r="5.9"/><circle cx="342.5" cy="427.2" r="5.9"/><circle cx="425.0" cy="205.8" r="5.9"/><circle cx="157.0" cy="452.5" r="5.9"/><circle cx="264.7" cy="308.9" r="5.9"/><circle cx="441.0" cy="436.6" r="5.9"/><circle cx="341.6" cy="390.6" r="5.9"/><circle cx="192.4" cy="358.2" r="5.9"/><circle cx="199.2" cy="179.6" r="5.9"/><circle cx="526.1" cy="310.1" r="5.9"/><circle cx="455.4" cy="537.9" r="5.9"/><circle cx="359.3" cy="232.5" r="5.9"/><circle cx="259.1" cy="331.7" r="5.9"/><circle cx="353.0" cy="515.9" r="5.9"/><circle cx="447.6" cy="301.3" r="5.9"/><circle cx="422.0" cy="550.6" r="5.9"/><circle cx="455.4" cy="255.2" r="5.9"/><circle cx="174.3" cy="341.9" r="5.9"/><circle cx="381.3" cy="514.9" r="5.9"/><circle cx="438.9" cy="175.4" r="5.9"/><circle cx="433.8" cy="444.6" r="5.9"/><circle cx="332.2" cy="524.0" r="5.9"/><circle cx="237.5" cy="301.3" r="5.9"/><circle cx="435.8" cy="221.8" r="5.9"/><circle cx="188.4" cy="424.3" r="5.9"/><circle cx="325.9" cy="452.5" r="5.9"/><circle cx="333.7" cy="177.6" r="5.9"/><circle cx="335.7" cy="499.6" r="5.9"/><circle cx="215.6" cy="339.6" r="5.9"/><circle cx="194.3" cy="347.4" r="5.9"/><circle cx="214.0" cy="337.6" r="5.9"/><circle cx="382.8" cy="518.2" r="5.9"/><circle cx="535.4" cy="319.3" r="5.9"/><circle cx="329.8" cy="486.8" r="5.9"/><circle cx="431.9" cy="178.6" r="5.9"/><circle cx="259.1" cy="442.6" r="5.9"/><circle cx="275.9" cy="313.1" r="5.9"/><circle cx="479.1" cy="198.2" r="5.9"/><circle cx="396.5" cy="500.6" r="5.9"/><circle cx="437.7" cy="426.9" r="5.9"/><circle cx="279.7" cy="225.7" r="5.9"/><circle cx="439.9" cy="371.1" r="5.9"/><circle cx="247.3" cy="453.4" r="5.9"/><circle cx="359.4" cy="216.3" r="5.9"/><circle cx="367.1" cy="279.7" r="5.9"/><circle cx="335.7" cy="260.1" r="5.9"/><circle cx="129.6" cy="460.3" r="5.9"/><circle cx="438.7" cy="207.1" r="5.9"/><circle cx="341.4" cy="206.5" r="5.9"/><circle cx="463.9" cy="308.5" r="5.9"/><circle cx="333.7" cy="243.4" r="5.9"/><circle cx="517.5" cy="277.4" r="5.9"/><circle cx="357.3" cy="361.2" r="5.9"/><circle cx="427.9" cy="416.1" r="5.9"/><circle cx="396.5" cy="283.6" r="5.9"/><circle cx="259.1" cy="427.9" r="5.9"/><circle cx="412.2" cy="331.7" r="5.9"/><circle cx="184.3" cy="422.3" r="5.9"/><circle cx="526.1" cy="252.1" r="5.9"/><circle cx="359.6" cy="269.2" r="5.9"/><circle cx="433.8" cy="479.9" r="5.9"/><circle cx="461.3" cy="312.1" r="5.9"/><circle cx="456.4" cy="252.7" r="5.9"/><circle cx="228.1" cy="288.9" r="5.9"/><circle cx="189.6" cy="377.9" r="5.9"/><circle cx="231.6" cy="310.1" r="5.9"/><circle cx="408.3" cy="451.5" r="5.9"/><circle cx="346.0" cy="257.5" r="5.9"/><circle cx="341.6" cy="500.6" r="5.9"/><circle cx="420.1" cy="355.3" r="5.9"/><circle cx="193.4" cy="379.8" r="5.9"/><circle cx="215.9" cy="353.3" r="5.9"/><circle cx="394.8" cy="228.6" r="5.9"/><circle cx="203.8" cy="369.5" r="5.9"/><circle cx="494.7" cy="375.9" r="5.9"/><circle cx="369.0" cy="378.9" r="5.9"/><circle cx="510.6" cy="308.1" r="5.9"/><circle cx="362.0" cy="407.0" r="5.9"/><circle cx="287.9" cy="288.4" r="5.9"/><circle cx="538.8" cy="387.3" r="5.9"/><circle cx="390.6" cy="456.2" r="5.9"/><circle cx="411.2" cy="553.6" r="5.9"/><circle cx="334.1" cy="252.6" r="5.9"/><circle cx="267.0" cy="460.3" r="5.9"/><circle cx="366.8" cy="528.9" r="5.9"/><circle cx="390.7" cy="175.5" r="5.9"/><circle cx="212.0" cy="477.0" r="5.9"/><circle cx="247.4" cy="436.7" r="5.9"/><circle cx="472.1" cy="451.5" r="5.9"/><circle cx="504.2" cy="325.8" r="5.9"/><circle cx="233.6" cy="367.1" r="5.9"/><circle cx="421.7" cy="251.1" r="5.9"/><circle cx="363.1" cy="233.6" r="5.9"/><circle cx="345.5" cy="230.6" r="5.9"/><circle cx="347.4" cy="162.5" r="5.9"/><circle cx="174.7" cy="417.4" r="5.9"/><circle cx="555.5" cy="366.1" r="5.9"/><circle cx="463.3" cy="223.8" r="5.9"/><circle cx="432.3" cy="247.0" r="5.9"/><circle cx="456.4" cy="504.5" r="5.9"/><circle cx="349.4" cy="506.4" r="5.9"/><circle cx="293.2" cy="450.4" r="5.9"/><circle cx="292.5" cy="454.4" r="5.9"/><circle cx="458.4" cy="442.6" r="5.9"/><circle cx="526.1" cy="392.6" r="5.9"/><circle cx="280.7" cy="482.9" r="5.9"/><circle cx="265.7" cy="305.7" r="5.9"/><circle cx="526.1" cy="289.5" r="5.9"/><circle cx="412.2" cy="219.9" r="5.9"/><circle cx="532.0" cy="216.9" r="5.9"/><circle cx="201.9" cy="363.6" r="5.9"/><circle cx="289.3" cy="464.3" r="5.9"/><circle cx="212.1" cy="332.0" r="5.9"/><circle cx="256.2" cy="280.7" r="5.9"/><circle cx="469.1" cy="420.1" r="5.9"/><circle cx="443.6" cy="460.3" r="5.9"/><circle cx="455.4" cy="211.0" r="5.9"/><circle cx="247.3" cy="250.7" r="5.9"/><circle cx="449.5" cy="226.7" r="5.9"/><circle cx="464.5" cy="213.1" r="5.9"/><circle cx="355.3" cy="530.0" r="5.9"/><circle cx="376.9" cy="168.8" r="5.9"/><circle cx="180.3" cy="384.7" r="5.9"/><circle cx="272.9" cy="493.7" r="5.9"/><circle cx="467.2" cy="537.9" r="5.9"/><circle cx="413.5" cy="334.5" r="5.9"/><circle cx="248.3" cy="301.3" r="5.9"/><circle cx="258.1" cy="484.2" r="5.9"/><circle cx="514.3" cy="374.9" r="5.9"/><circle cx="372.8" cy="167.2" r="5.9"/><circle cx="254.2" cy="294.4" r="5.9"/><circle cx="311.1" cy="241.8" r="5.9"/><circle cx="80.1" cy="243.0" r="5.9"/><circle cx="304.3" cy="425.0" r="5.9"/><circle cx="413.0" cy="342.1" r="5.9"/><circle cx="559.4" cy="376.9" r="5.9"/><circle cx="202.2" cy="357.3" r="5.9"/><circle cx="449.5" cy="199.2" r="5.9"/><circle cx="463.3" cy="217.9" r="5.9"/><circle cx="173.7" cy="116.8" r="5.9"/><circle cx="385.6" cy="246.0" r="5.9"/><circle cx="137.4" cy="475.0" r="5.9"/><circle cx="455.4" cy="215.9" r="5.9"/><circle cx="235.0" cy="309.8" r="5.9"/><circle cx="443.6" cy="183.5" r="5.9"/><circle cx="341.6" cy="441.7" r="5.9"/><circle cx="269.7" cy="443.5" r="5.9"/><circle cx="312.7" cy="229.2" r="5.9"/><circle cx="441.7" cy="225.7" r="5.9"/><circle cx="161.0" cy="466.2" r="5.9"/><circle cx="308.2" cy="327.8" r="5.9"/><circle cx="298.4" cy="469.1" r="5.9"/><circle cx="366.3" cy="497.5" r="5.9"/><circle cx="275.8" cy="291.5" r="5.9"/><circle cx="247.4" cy="466.1" r="5.9"/><circle cx="352.9" cy="295.4" r="5.9"/><circle cx="327.8" cy="262.1" r="5.9"/><circle cx="482.7" cy="364.9" r="5.9"/><circle cx="496.6" cy="365.1" r="5.9"/><circle cx="418.6" cy="503.8" r="5.9"/><circle cx="530.0" cy="364.1" r="5.9"/><circle cx="110.9" cy="197.3" r="5.9"/><circle cx="323.2" cy="414.8" r="5.9"/><circle cx="232.6" cy="195.3" r="5.9"/><circle cx="251.0" cy="286.8" r="5.9"/><circle cx="208.5" cy="479.9" r="5.9"/><circle cx="505.5" cy="247.3" r="5.9"/><circle cx="474.1" cy="188.4" r="5.9"/><circle cx="378.9" cy="414.2" r="5.9"/><circle cx="338.4" cy="497.9" r="5.9"/><circle cx="184.5" cy="418.1" r="5.9"/><circle cx="541.5" cy="366.0" r="5.9"/><circle cx="307.5" cy="433.9" r="5.9"/><circle cx="386.7" cy="532.0" r="5.9"/><circle cx="340.3" cy="529.4" r="5.9"/><circle cx="433.8" cy="510.4" r="5.9"/><circle cx="349.4" cy="369.0" r="5.9"/><circle cx="308.2" cy="222.8" r="5.9"/><circle cx="363.5" cy="395.1" r="5.9"/><circle cx="354.7" cy="442.6" r="5.9"/><circle cx="148.2" cy="429.9" r="5.9"/><circle cx="482.9" cy="341.6" r="5.9"/><circle cx="471.1" cy="259.1" r="5.9"/><circle cx="359.5" cy="383.3" r="5.9"/><circle cx="392.6" cy="559.4" r="5.9"/><circle cx="493.6" cy="366.4" r="5.9"/><circle cx="371.0" cy="296.4" r="5.9"/><circle cx="302.3" cy="294.4" r="5.9"/><circle cx="481.6" cy="394.8" r="5.9"/><circle cx="403.4" cy="465.2" r="5.9"/><circle cx="223.8" cy="304.3" r="5.9"/><circle cx="357.3" cy="200.2" r="5.9"/><circle cx="250.5" cy="312.9" r="5.9"/><circle cx="431.9" cy="235.6" r="5.9"/><circle cx="522.1" cy="323.9" r="5.9"/><circle cx="520.7" cy="316.3" r="5.9"/><circle cx="504.5" cy="299.4" r="5.9"/><circle cx="427.9" cy="294.4" r="5.9"/><circle cx="361.9" cy="187.7" r="5.9"/><circle cx="170.8" cy="383.8" r="5.9"/><circle cx="526.1" cy="202.2" r="5.9"/><circle cx="343.2" cy="228.0" r="5.9"/><circle cx="352.8" cy="369.3" r="5.9"/><circle cx="478.5" cy="352.4" r="5.9"/><circle cx="325.4" cy="449.9" r="5.9"/><circle cx="211.0" cy="327.8" r="5.9"/><circle cx="256.2" cy="310.6" r="5.9"/><circle cx="420.2" cy="227.5" r="5.9"/><circle cx="327.7" cy="488.3" r="5.9"/><circle cx="412.2" cy="231.6" r="5.9"/><circle cx="429.9" cy="170.8" r="5.9"/><circle cx="261.1" cy="486.8" r="5.9"/><circle cx="385.2" cy="280.5" r="5.9"/><circle cx="314.1" cy="232.6" r="5.9"/><circle cx="367.2" cy="505.9" r="5.9"/><circle cx="172.7" cy="403.4" r="5.9"/><circle cx="359.2" cy="257.1" r="5.9"/><circle cx="342.0" cy="510.1" r="5.9"/><circle cx="452.5" cy="181.6" r="5.9"/><circle cx="425.1" cy="552.6" r="5.9"/><circle cx="455.4" cy="513.3" r="5.9"/><circle cx="147.2" cy="441.7" r="5.9"/><circle cx="524.1" cy="267.9" r="5.9"/><circle cx="472.1" cy="210.0" r="5.9"/><circle cx="160.0" cy="245.4" r="5.9"/><circle cx="390.6" cy="551.6" r="5.9"/><circle cx="540.1" cy="352.3" r="5.9"/><circle cx="318.0" cy="274.8" r="5.9"/><circle cx="444.6" cy="437.7" r="5.9"/><circle cx="379.8" cy="495.6" r="5.9"/><circle cx="174.7" cy="79.5" r="5.9"/><circle cx="423.6" cy="179.4" r="5.9"/><circle cx="192.4" cy="335.7" r="5.9"/><circle cx="480.7" cy="466.4" r="5.9"/><circle cx="247.3" cy="253.2" r="5.9"/><circle cx="306.0" cy="456.5" r="5.9"/><circle cx="453.9" cy="430.1" r="5.9"/><circle cx="206.1" cy="367.1" r="5.9"/><circle cx="294.4" cy="282.7" r="5.9"/><circle cx="475.1" cy="383.1" r="5.9"/><circle cx="349.4" cy="247.3" r="5.9"/><circle cx="166.9" cy="408.3" r="5.9"/><circle cx="349.4" cy="520.2" r="5.9"/><circle cx="532.1" cy="346.8" r="5.9"/><circle cx="243.4" cy="396.5" r="5.9"/><circle cx="506.4" cy="410.3" r="5.9"/><circle cx="357.3" cy="384.7" r="5.9"/><circle cx="254.8" cy="495.9" r="5.9"/><circle cx="398.0" cy="205.1" r="5.9"/><circle cx="342.1" cy="376.6" r="5.9"/><circle cx="535.9" cy="271.9" r="5.9"/><circle cx="321.5" cy="226.2" r="5.9"/><circle cx="195.3" cy="308.2" r="5.9"/><circle cx="284.6" cy="447.6" r="5.9"/><circle cx="528.0" cy="400.4" r="5.9"/><circle cx="208.1" cy="352.4" r="5.9"/><circle cx="488.8" cy="359.2" r="5.9"/><circle cx="325.9" cy="275.5" r="5.9"/><circle cx="182.0" cy="96.2" r="5.9"/><circle cx="373.0" cy="388.7" r="5.9"/><circle cx="507.1" cy="282.2" r="5.9"/><circle cx="418.3" cy="559.7" r="5.9"/><circle cx="502.5" cy="329.8" r="5.9"/><circle cx="337.6" cy="292.5" r="5.9"/><circle cx="214.9" cy="286.6" r="5.9"/><circle cx="454.8" cy="213.6" r="5.9"/><circle cx="502.5" cy="501.5" r="5.9"/><circle cx="502.5" cy="392.6" r="5.9"/><circle cx="338.8" cy="501.1" r="5.9"/><circle cx="171.8" cy="418.1" r="5.9"/><circle cx="465.2" cy="261.1" r="5.9"/><circle cx="352.4" cy="505.9" r="5.9"/><circle cx="319.0" cy="403.4" r="5.9"/><circle cx="289.3" cy="214.2" r="5.9"/><circle cx="392.6" cy="261.1" r="5.9"/><circle cx="257.1" cy="457.4" r="5.9"/><circle cx="249.3" cy="334.7" r="5.9"/><circle cx="488.8" cy="206.1" r="5.9"/><circle cx="474.7" cy="360.4" r="5.9"/><circle cx="237.7" cy="261.1" r="5.9"/><circle cx="269.7" cy="305.5" r="5.9"/><circle cx="294.0" cy="508.4" r="5.9"/><circle cx="365.1" cy="198.3" r="5.9"/><circle cx="479.2" cy="216.3" r="5.9"/><circle cx="141.3" cy="434.8" r="5.9"/><circle cx="257.4" cy="401.2" r="5.9"/><circle cx="535.9" cy="263.0" r="5.9"/><circle cx="155.1" cy="408.3" r="5.9"/><circle cx="471.1" cy="214.0" r="5.9"/><circle cx="382.8" cy="433.8" r="5.9"/><circle cx="424.0" cy="449.5" r="5.9"/><circle cx="187.2" cy="362.3" r="5.9"/><circle cx="135.4" cy="453.4" r="5.9"/><circle cx="365.1" cy="261.1" r="5.9"/><circle cx="516.3" cy="418.1" r="5.9"/><circle cx="516.3" cy="286.6" r="5.9"/><circle cx="373.0" cy="441.7" r="5.9"/><circle cx="423.1" cy="489.5" r="5.9"/><circle cx="286.6" cy="387.7" r="5.9"/><circle cx="476.0" cy="229.3" r="5.9"/><circle cx="486.7" cy="328.4" r="5.9"/><circle cx="259.1" cy="414.2" r="5.9"/><circle cx="438.0" cy="417.8" r="5.9"/><circle cx="372.0" cy="484.8" r="5.9"/><circle cx="497.3" cy="355.4" r="5.9"/><circle cx="345.5" cy="192.4" r="5.9"/><circle cx="355.3" cy="498.6" r="5.9"/><circle cx="247.0" cy="280.4" r="5.9"/><circle cx="219.9" cy="313.1" r="5.9"/><circle cx="381.8" cy="468.2" r="5.9"/><circle cx="444.6" cy="288.6" r="5.9"/><circle cx="199.2" cy="316.0" r="5.9"/><circle cx="339.6" cy="483.9" r="5.9"/><circle cx="400.4" cy="239.5" r="5.9"/><circle cx="432.8" cy="499.6" r="5.9"/><circle cx="453.4" cy="394.6" r="5.9"/><circle cx="390.6" cy="290.5" r="5.9"/><circle cx="388.7" cy="217.9" r="5.9"/><circle cx="140.9" cy="341.9" r="5.9"/><circle cx="231.0" cy="199.2" r="5.9"/><circle cx="502.5" cy="427.9" r="5.9"/><circle cx="543.7" cy="324.9" r="5.9"/><circle cx="284.6" cy="508.4" r="5.9"/><circle cx="444.2" cy="357.2" r="5.9"/><circle cx="179.6" cy="376.9" r="5.9"/><circle cx="184.5" cy="424.0" r="5.9"/><circle cx="469.1" cy="548.6" r="5.9"/><circle cx="152.3" cy="431.6" r="5.9"/><circle cx="268.9" cy="251.3" r="5.9"/><circle cx="370.6" cy="415.6" r="5.9"/><circle cx="241.4" cy="420.1" r="5.9"/><circle cx="192.4" cy="391.8" r="5.9"/><circle cx="480.9" cy="494.7" r="5.9"/><circle cx="497.1" cy="383.2" r="5.9"/><circle cx="454.1" cy="307.9" r="5.9"/><circle cx="282.7" cy="426.9" r="5.9"/><circle cx="524.1" cy="408.3" r="5.9"/><circle cx="386.7" cy="373.0" r="5.9"/><circle cx="515.7" cy="366.3" r="5.9"/><circle cx="251.3" cy="482.9" r="5.9"/><circle cx="432.3" cy="346.9" r="5.9"/><circle cx="328.8" cy="488.3" r="5.9"/><circle cx="502.7" cy="363.6" r="5.9"/><circle cx="336.2" cy="290.0" r="5.9"/><circle cx="406.4" cy="258.0" r="5.9"/><circle cx="334.0" cy="221.3" r="5.9"/><circle cx="403.4" cy="223.8" r="5.9"/><circle cx="208.1" cy="480.9" r="5.9"/><circle cx="545.4" cy="337.7" r="5.9"/><circle cx="205.8" cy="359.9" r="5.9"/><circle cx="211.0" cy="418.1" r="5.9"/><circle cx="446.6" cy="463.1" r="5.9"/><circle cx="347.4" cy="286.6" r="5.9"/><circle cx="172.7" cy="424.0" r="5.9"/><circle cx="512.3" cy="429.9" r="5.9"/><circle cx="490.7" cy="262.1" r="5.9"/><circle cx="189.4" cy="405.4" r="5.9"/><circle cx="547.7" cy="403.4" r="5.9"/><circle cx="79.5" cy="261.1" r="5.9"/><circle cx="280.7" cy="466.2" r="5.9"/><circle cx="535.9" cy="376.9" r="5.9"/><circle cx="528.4" cy="371.8" r="5.9"/><circle cx="114.2" cy="172.7" r="5.9"/><circle cx="356.9" cy="462.0" r="5.9"/><circle cx="207.1" cy="450.5" r="5.9"/><circle cx="422.0" cy="363.1" r="5.9"/><circle cx="450.3" cy="264.8" r="5.9"/><circle cx="333.7" cy="426.0" r="5.9"/><circle cx="306.2" cy="367.1" r="5.9"/><circle cx="325.6" cy="288.6" r="5.9"/><circle cx="519.7" cy="307.1" r="5.9"/><circle cx="512.3" cy="331.7" r="5.9"/><circle cx="431.9" cy="349.4" r="5.9"/><circle cx="377.9" cy="226.7" r="5.9"/><circle cx="224.8" cy="217.9" r="5.9"/><circle cx="257.1" cy="314.1" r="5.9"/><circle cx="479.7" cy="413.2" r="5.9"/><circle cx="427.9" cy="217.9" r="5.9"/><circle cx="289.6" cy="419.6" r="5.9"/><circle cx="363.1" cy="482.9" r="5.9"/><circle cx="468.3" cy="250.5" r="5.9"/><circle cx="369.0" cy="429.9" r="5.9"/><circle cx="182.0" cy="116.2" r="5.9"/><circle cx="343.3" cy="173.9" r="5.9"/><circle cx="468.2" cy="322.9" r="5.9"/></g>
<circle cx="333.7" cy="198.7" r="8.0" fill="#1273e8" stroke="#9fc7f4" stroke-width="1.2"/><text x="333.7" y="201.9" text-anchor="middle" font-size="9" font-weight="bold" font-family="Liberation Sans" fill="#fff">10</text><circle cx="299.4" cy="251.3" r="11.0" fill="#1273e8" stroke="#9fc7f4" stroke-width="1.2"/><text x="299.4" y="254.5" text-anchor="middle" font-size="9" font-weight="bold" font-family="Liberation Sans" fill="#fff">11</text><circle cx="231.6" cy="325.9" r="11.0" fill="#1273e8" stroke="#9fc7f4" stroke-width="1.2"/><text x="231.6" y="329.1" text-anchor="middle" font-size="9" font-weight="bold" font-family="Liberation Sans" fill="#fff">12</text><circle cx="219.9" cy="369.0" r="11.0" fill="#1273e8" stroke="#9fc7f4" stroke-width="1.2"/><text x="219.9" y="372.2" text-anchor="middle" font-size="9" font-weight="bold" font-family="Liberation Sans" fill="#fff">11</text><circle cx="400.4" cy="394.6" r="11.0" fill="#1273e8" stroke="#9fc7f4" stroke-width="1.2"/><text x="400.4" y="397.8" text-anchor="middle" font-size="9" font-weight="bold" font-family="Liberation Sans" fill="#fff">11</text><circle cx="439.7" cy="272.9" r="8.5" fill="#1273e8" stroke="#9fc7f4" stroke-width="1.2"/><text x="439.7" y="276.1" text-anchor="middle" font-size="9" font-weight="bold" font-family="Liberation Sans" fill="#fff">10</text><circle cx="476.0" cy="288.9" r="8.5" fill="#1273e8" stroke="#9fc7f4" stroke-width="1.2"/><text x="476.0" y="292.1" text-anchor="middle" font-size="9" font-weight="bold" font-family="Liberation Sans" fill="#fff">10</text><circle cx="449.5" cy="317.0" r="10.0" fill="#1273e8" stroke="#9fc7f4" stroke-width="1.2"/><text x="449.5" y="320.2" text-anchor="middle" font-size="9" font-weight="bold" font-family="Liberation Sans" fill="#fff">18</text><circle cx="482.9" cy="325.9" r="8.5" fill="#1273e8" stroke="#9fc7f4" stroke-width="1.2"/><text x="482.9" y="329.1" text-anchor="middle" font-size="9" font-weight="bold" font-family="Liberation Sans" fill="#fff">10</text><circle cx="464.2" cy="340.6" r="11.5" fill="#1273e8" stroke="#9fc7f4" stroke-width="1.2"/><text x="464.2" y="343.8" text-anchor="middle" font-size="9" font-weight="bold" font-family="Liberation Sans" fill="#fff">19</text><circle cx="427.9" cy="400.4" r="11.0" fill="#1273e8" stroke="#9fc7f4" stroke-width="1.2"/><text x="427.9" y="403.6" text-anchor="middle" font-size="9" font-weight="bold" font-family="Liberation Sans" fill="#fff">11</text><circle cx="273.8" cy="476.0" r="10.0" fill="#1273e8" stroke="#9fc7f4" stroke-width="1.2"/><text x="273.8" y="479.2" text-anchor="middle" font-size="9" font-weight="bold" font-family="Liberation Sans" fill="#fff">12</text><circle cx="369.0" cy="521.2" r="11.0" fill="#1273e8" stroke="#9fc7f4" stroke-width="1.2"/><text x="369.0" y="524.4" text-anchor="middle" font-size="9" font-weight="bold" font-family="Liberation Sans" fill="#fff">11</text><circle cx="440.7" cy="528.0" r="11.5" fill="#1273e8" stroke="#9fc7f4" stroke-width="1.2"/><text x="440.7" y="531.2" text-anchor="middle" font-size="9" font-weight="bold" font-family="Liberation Sans" fill="#fff">15</text><circle cx="404.4" cy="223.8" r="8.5" fill="#1273e8" stroke="#9fc7f4" stroke-width="1.2"/><text x="404.4" y="227.0" text-anchor="middle" font-size="9" font-weight="bold" font-family="Liberation Sans" fill="#fff">10</text><circle cx="374.9" cy="249.3" r="8.5" fill="#1273e8" stroke="#9fc7f4" stroke-width="1.2"/><text x="374.9" y="252.5" text-anchor="middle" font-size="9" font-weight="bold" font-family="Liberation Sans" fill="#fff">10</text>
<circle cx="237.5" cy="328" r="5.9" fill="#1273e8" stroke="#b3d5f8" stroke-width="1.5"/>
<rect x="606" y="15" width="21" height="21" rx="3.5" fill="#151515"/>
<path d="M612,30 L620.8,21.2 M616.6,21 L621,21 L621,25.4 M611.8,25.6 L611.8,30.2 L616.4,30.2" stroke="#fff" stroke-width="1.3" fill="none" stroke-linecap="round"/>
</svg></div>
<div class="b" style="left:1053.5px;top:348px;width:460px;height:377.5px;border-top:1px solid #222;border-left:1px solid #1d1d1d"></div>
<div class="t s" style="left:1060.00px;top:357.41px;font-size:10.5px;color:#e4e4e4;text-shadow:0 0 0.3px #fff">Numéro</div>
<div class="t s" style="left:1156.50px;top:357.41px;font-size:10.5px;color:#e4e4e4;text-shadow:0 0 0.3px #fff">Adresse</div>
<div class="t s" style="left:1313.80px;top:357.41px;font-size:10.5px;color:#e4e4e4;text-shadow:0 0 0.3px #fff">Surface</div>
<div class="t s" style="left:1417.50px;top:357.41px;font-size:10.5px;color:#e4e4e4;text-shadow:0 0 0.3px #fff">Dernière Vente</div>
<svg class="b" style="left:1103.5px;top:357.5px" width="11" height="11" viewBox="0 0 24 24" fill="none" stroke="#d8d8d8" stroke-width="2.2" stroke-linejoin="round"><path d="M22 3H2l8 9.5V19l4 2v-8.5Z"/></svg>
<svg class="b" style="left:1202px;top:357.5px" width="11" height="11" viewBox="0 0 24 24" fill="none" stroke="#d8d8d8" stroke-width="2.2" stroke-linejoin="round"><path d="M22 3H2l8 9.5V19l4 2v-8.5Z"/></svg>
<svg class="b" style="left:1389.5px;top:357.5px" width="11" height="11" viewBox="0 0 24 24" fill="none" stroke="#d8d8d8" stroke-width="2.2" stroke-linejoin="round"><path d="M22 3H2l8 9.5V19l4 2v-8.5Z"/></svg>
<svg class="b" style="left:1362px;top:357px" width="12" height="12" viewBox="0 0 24 24" fill="none" stroke="#d8d8d8" stroke-width="2.4" stroke-linecap="round" stroke-linejoin="round"><path d="m3 8 4-4 4 4M7 4v16M21 16l-4 4-4-4M17 20V4"/></svg>
<div class="t s" style="left:1500.00px;top:357.41px;font-size:10.5px;color:#e4e4e4;">1</div>
<div class="b" style="left:1054.5px;top:377px;width:450px;height:1px;background:#222"></div>
<div class="b" style="left:1054.5px;top:403.9px;width:450px;height:1px;background:#1e1e1e"></div>
<div class="b" style="left:1054.5px;top:430.9px;width:450px;height:1px;background:#1e1e1e"></div>
<div class="b" style="left:1054.5px;top:457.8px;width:450px;height:1px;background:#1e1e1e"></div>
<div class="b" style="left:1054.5px;top:484.7px;width:450px;height:1px;background:#1e1e1e"></div>
<div class="b" style="left:1054.5px;top:511.6px;width:450px;height:1px;background:#1e1e1e"></div>
<div class="b" style="left:1054.5px;top:538.6px;width:450px;height:1px;background:#1e1e1e"></div>
<div class="b" style="left:1054.5px;top:565.5px;width:450px;height:1px;background:#1e1e1e"></div>
<div class="b" style="left:1054.5px;top:592.4px;width:450px;height:1px;background:#1e1e1e"></div>
<div class="b" style="left:1054.5px;top:619.4px;width:450px;height:1px;background:#1e1e1e"></div>
<div class="b" style="left:1054.5px;top:646.3px;width:450px;height:1px;background:#1e1e1e"></div>
<div class="b" style="left:1054.5px;top:673.2px;width:450px;height:1px;background:#1e1e1e"></div>
<div class="b" style="left:1054.5px;top:700.2px;width:450px;height:1px;background:#1e1e1e"></div>
<div class="b" style="left:1054.5px;top:378px;width:450px;height:334px;overflow:hidden">
<div class="t m" style="left:5.20px;top:9.01px;font-size:10.1px;color:#ececec;font-weight:bold;">75106000BM0021</div>
<div class="t s" style="left:102.00px;top:7.86px;font-size:10.5px;color:#e6e6e6;letter-spacing:-0.1px;text-shadow:0 0 0.4px #ddd">56 RUE JACOB 75006 PARI...</div>
<div class="t s" style="left:265.30px;width:80px;text-align:center;top:7.86px;font-size:10.5px;color:#e0e0e0">774 m²</div>
<div class="t s" style="right:1.50px;top:7.86px;font-size:10.5px;color:#e6e6e6;word-spacing:-0.6px;text-shadow:0 0 0.4px #ddd">60 000 000</div>
<div class="t m" style="left:5.20px;top:35.94px;font-size:10.1px;color:#ececec;font-weight:bold;">75117000BL0060</div>
<div class="t s" style="left:102.00px;top:34.79px;font-size:10.5px;color:#e6e6e6;letter-spacing:-0.1px;text-shadow:0 0 0.4px #ddd">11 RUE DE PRONY 75017 PA...</div>
<div class="t s" style="left:265.30px;width:80px;text-align:center;top:34.79px;font-size:10.5px;color:#e0e0e0">1346 m²</div>
<div class="t s" style="right:1.50px;top:34.79px;font-size:10.5px;color:#e6e6e6;word-spacing:-0.6px;text-shadow:0 0 0.4px #ddd">45 310 000</div>
<div class="t m" style="left:5.20px;top:62.87px;font-size:10.1px;color:#ececec;font-weight:bold;">75117000BL0101</div>
<div class="t s" style="left:102.00px;top:61.72px;font-size:10.5px;color:#e6e6e6;letter-spacing:-0.1px;text-shadow:0 0 0.4px #ddd">1S VOIE S/17 75017 PARIS 17...</div>
<div class="t s" style="left:265.30px;width:80px;text-align:center;top:61.72px;font-size:10.5px;color:#e0e0e0">110 m²</div>
<div class="t s" style="right:1.50px;top:61.72px;font-size:10.5px;color:#e6e6e6;word-spacing:-0.6px;text-shadow:0 0 0.4px #ddd">45 310 000</div>
<div class="t m" style="left:5.20px;top:89.80px;font-size:10.1px;color:#ececec;font-weight:bold;">75117000BL0103</div>
<div class="t s" style="left:102.00px;top:88.65px;font-size:10.5px;color:#e6e6e6;letter-spacing:-0.1px;text-shadow:0 0 0.4px #ddd">2S VOIE S/17 75017 PARIS 1...</div>
<div class="t s" style="left:265.30px;width:80px;text-align:center;top:88.65px;font-size:10.5px;color:#e0e0e0">88 m²</div>
<div class="t s" style="right:1.50px;top:88.65px;font-size:10.5px;color:#e6e6e6;word-spacing:-0.6px;text-shadow:0 0 0.4px #ddd">45 310 000</div>
<div class="t m" style="left:5.20px;top:116.73px;font-size:10.1px;color:#ececec;font-weight:bold;">75108000AV0058</div>
<div class="t s" style="left:102.00px;top:115.58px;font-size:10.5px;color:#e6e6e6;letter-spacing:-0.1px;text-shadow:0 0 0.4px #ddd">152 DES CHAMPS ELYSEES ...</div>
<div class="t s" style="left:265.30px;width:80px;text-align:center;top:115.58px;font-size:10.5px;color:#e0e0e0">526 m²</div>
<div class="t s" style="right:1.50px;top:115.58px;font-size:10.5px;color:#e6e6e6;word-spacing:-0.6px;text-shadow:0 0 0.4px #ddd">41 123 512</div>
<div class="t m" style="left:5.20px;top:143.66px;font-size:10.1px;color:#ececec;font-weight:bold;">75103000AO0017</div>
<div class="t s" style="left:102.00px;top:142.51px;font-size:10.5px;color:#e6e6e6;letter-spacing:-0.1px;text-shadow:0 0 0.4px #ddd">28 RUE DES FRANCS BOUR...</div>
<div class="t s" style="left:265.30px;width:80px;text-align:center;top:142.51px;font-size:10.5px;color:#e0e0e0">951 m²</div>
<div class="t s" style="right:1.50px;top:142.51px;font-size:10.5px;color:#e6e6e6;word-spacing:-0.6px;text-shadow:0 0 0.4px #ddd">37 000 000</div>
<div class="t m" style="left:5.20px;top:170.59px;font-size:10.1px;color:#ececec;font-weight:bold;">75116000DX0045</div>
<div class="t s" style="left:102.00px;top:169.44px;font-size:10.5px;color:#e6e6e6;letter-spacing:-0.1px;text-shadow:0 0 0.4px #ddd">90 AV VICTOR HUGO 75016...</div>
<div class="t s" style="left:265.30px;width:80px;text-align:center;top:169.44px;font-size:10.5px;color:#e0e0e0">815 m²</div>
<div class="t s" style="right:1.50px;top:169.44px;font-size:10.5px;color:#e6e6e6;word-spacing:-0.6px;text-shadow:0 0 0.4px #ddd">35 210 000</div>
<div class="t m" style="left:5.20px;top:197.52px;font-size:10.1px;color:#ececec;font-weight:bold;">75115000EU0051</div>
<div class="t s" style="left:102.00px;top:196.37px;font-size:10.5px;color:#e6e6e6;letter-spacing:-0.1px;text-shadow:0 0 0.4px #ddd">3 VILLA THORÉTON 75015 ...</div>
<div class="t s" style="left:265.30px;width:80px;text-align:center;top:196.37px;font-size:10.5px;color:#e0e0e0">1199 m²</div>
<div class="t s" style="right:1.50px;top:196.37px;font-size:10.5px;color:#e6e6e6;word-spacing:-0.6px;text-shadow:0 0 0.4px #ddd">33 900 000</div>
<div class="t m" style="left:5.20px;top:224.45px;font-size:10.1px;color:#ececec;font-weight:bold;">75107000AD0012</div>
<div class="t s" style="left:102.00px;top:223.30px;font-size:10.5px;color:#e6e6e6;letter-spacing:-0.1px;text-shadow:0 0 0.4px #ddd">234 BD SAINT GERMAIN 75...</div>
<div class="t s" style="left:265.30px;width:80px;text-align:center;top:223.30px;font-size:10.5px;color:#e0e0e0">514 m²</div>
<div class="t s" style="right:1.50px;top:223.30px;font-size:10.5px;color:#e6e6e6;word-spacing:-0.6px;text-shadow:0 0 0.4px #ddd">33 000 000</div>
<div class="t m" style="left:5.20px;top:251.38px;font-size:10.1px;color:#ececec;font-weight:bold;">75116000FL0002</div>
<div class="t s" style="left:102.00px;top:250.23px;font-size:10.5px;color:#e6e6e6;letter-spacing:-0.1px;text-shadow:0 0 0.4px #ddd">96 RUE LAURISTON 75016 ...</div>
<div class="t s" style="left:265.30px;width:80px;text-align:center;top:250.23px;font-size:10.5px;color:#e0e0e0">1243 m²</div>
<div class="t s" style="right:1.50px;top:250.23px;font-size:10.5px;color:#e6e6e6;word-spacing:-0.6px;text-shadow:0 0 0.4px #ddd">33 000 000</div>
<div class="t m" style="left:5.20px;top:278.31px;font-size:10.1px;color:#ececec;font-weight:bold;">75116000BQ0209</div>
<div class="t s" style="left:102.00px;top:277.16px;font-size:10.5px;color:#e6e6e6;letter-spacing:-0.1px;text-shadow:0 0 0.4px #ddd">9 AVENUE DE MONTMOREN...</div>
<div class="t s" style="left:265.30px;width:80px;text-align:center;top:277.16px;font-size:10.5px;color:#e0e0e0">771 m²</div>
<div class="t s" style="right:1.50px;top:277.16px;font-size:10.5px;color:#e6e6e6;word-spacing:-0.6px;text-shadow:0 0 0.4px #ddd">26 273 500</div>
<div class="t m" style="left:5.20px;top:305.24px;font-size:10.1px;color:#ececec;font-weight:bold;">75116000BQ0210</div>
<div class="t s" style="left:102.00px;top:304.09px;font-size:10.5px;color:#e6e6e6;letter-spacing:-0.1px;text-shadow:0 0 0.4px #ddd">1 AVENUE DE MONTMOREN...</div>
<div class="t s" style="left:265.30px;width:80px;text-align:center;top:304.09px;font-size:10.5px;color:#e0e0e0">1443 m²</div>
<div class="t s" style="right:1.50px;top:304.09px;font-size:10.5px;color:#e6e6e6;word-spacing:-0.6px;text-shadow:0 0 0.4px #ddd">26 273 500</div>
<div class="t m" style="left:5.20px;top:332.17px;font-size:10.1px;color:#ececec;font-weight:bold;">75106000AB0008</div>
<div class="t s" style="left:102.00px;top:331.02px;font-size:10.5px;color:#e6e6e6;letter-spacing:-0.1px;text-shadow:0 0 0.4px #ddd">17 RUE DE BUCI 75006 PARI...</div>
<div class="t s" style="left:265.30px;width:80px;text-align:center;top:331.02px;font-size:10.5px;color:#e0e0e0">961 m²</div>
<div class="t s" style="right:1.50px;top:331.02px;font-size:10.5px;color:#e6e6e6;word-spacing:-0.6px;text-shadow:0 0 0.4px #ddd">24 000 000</div>
</div>
<div class="b" style="left:1054.5px;top:725px;width:450px;height:1px;background:#222"></div>
<div class="t s" style="left:1059.20px;top:744.61px;font-size:10.5px;color:#858585;">1247 ligne(s) affichée(s).</div>
<div class="t s" style="left:1358.70px;top:744.53px;font-size:10px;color:#e8e8e8;font-weight:bold;">Lignes par page</div>
<div class="b" style="left:1441.5px;top:737.3px;width:50.5px;height:26px;background:#141414;border:1px solid #2c2c2c;border-radius:5px;overflow:hidden"></div>
<div class="t s" style="left:1450.60px;top:744.61px;font-size:10.5px;color:#e8e8e8;">10<span style="display:inline-block;width:4px;overflow:hidden;vertical-align:bottom">0</span></div>
<svg class="b" style="left:1472px;top:746px" width="8" height="8" viewBox="0 0 24 24" fill="none" stroke="#888" stroke-width="2.5"><path d="m6 9 6 6 6-6"/></svg>
<div class="b" style="left:1504.5px;top:243px;width:386px;height:594px;background:#0f0f0f;border:1px solid #2b2b2b;border-radius:4px;box-shadow:0 0 0 1px #0a0a0a"></div>
<div class="t s" style="left:1516.50px;top:257.54px;font-size:10px;color:#f0f0f0;font-weight:bold;">56 RUE JACOB 75006 PARIS 6E</div>
<div class="t s" style="left:1516.50px;top:271.64px;font-size:10px;color:#f0f0f0;font-weight:bold;">ARRONDISSEMENT</div>
<div class="b" style="left:1516.5px;top:286px;width:5px;height:5px;border-radius:50%;background:#555"></div>
<div class="t s" style="left:1524.80px;top:285.07px;font-size:7.0px;color:#6a6a6a;">75106000BM0021&nbsp;&nbsp;(PARIS 6E ARRONDISSEMENT)</div>
<div class="b" style="left:1737px;top:265.5px;width:51px;height:16.5px;background:#121212;border:1px solid #252525;border-radius:4px"></div>
<svg class="b" style="left:1742px;top:269px" width="9" height="9" viewBox="0 0 24 24" fill="none" stroke="#ddd" stroke-width="2.4" stroke-linecap="round" stroke-linejoin="round"><path d="M15 3h6v6M10 14 21 3M18 13v6a2 2 0 0 1-2 2H5a2 2 0 0 1-2-2V8a2 2 0 0 1 2-2h6"/></svg>
<div class="t s" style="left:1754.50px;top:271.16px;font-size:6.9px;color:#dedede;font-weight:bold;">Pappers</div>
<div class="b" style="left:1791.5px;top:265.5px;width:67px;height:16.5px;background:#121212;border:1px solid #252525;border-radius:4px"></div>
<svg class="b" style="left:1796.5px;top:269px" width="9" height="9" viewBox="0 0 24 24" fill="none" stroke="#ddd" stroke-width="2.4" stroke-linecap="round" stroke-linejoin="round"><path d="M20 10c0 5-5.5 10.2-7.4 11.8a1 1 0 0 1-1.2 0C9.5 20.2 4 15 4 10a8 8 0 0 1 16 0"/><circle cx="12" cy="10" r="3"/></svg>
<div class="t s" style="left:1809.00px;top:271.16px;font-size:6.9px;color:#dedede;font-weight:bold;">Google Maps</div>
<div class="b" style="left:1874px;top:247px;width:13px;height:12.5px;border:1px solid #3a3a3a;border-radius:3px"></div>
<svg class="b" style="left:1876.5px;top:249.2px" width="8" height="8" viewBox="0 0 24 24" fill="none" stroke="#ccc" stroke-width="3" stroke-linecap="round"><path d="M18 6 6 18M6 6l12 12"/></svg>
<div class="b" style="left:1505.5px;top:301px;width:384px;height:1px;background:#202020"></div>
<div class="b" style="left:1515.5px;top:321.5px;width:363px;height:180px;background:#171717;border:1px solid #222;border-radius:8px"></div>
<svg class="b" style="left:1528.5px;top:337px" width="10" height="10" viewBox="0 0 24 24" fill="none" stroke="#ddd" stroke-width="2.3" stroke-linecap="round" stroke-linejoin="round"><path d="M20 10c0 5-5.5 10.2-7.4 11.8a1 1 0 0 1-1.2 0C9.5 20.2 4 15 4 10a8 8 0 0 1 16 0"/><circle cx="12" cy="10" r="3"/></svg>
<div class="t s" style="left:1542.80px;top:338.25px;font-size:8.8px;color:#f0f0f0;font-weight:bold;">Informations Parcelle</div>
<div class="t s" style="left:1528.75px;top:366.21px;font-size:6.6px;color:#7a7a7a;">Numéro:</div>
<div class="t s" style="left:1528.75px;top:375.29px;font-size:7.1px;color:#e8e8e8;"><span class="m" style="font-weight:bold">75106000BM0021</span></div>
<div class="t s" style="left:1703.70px;top:366.21px;font-size:6.6px;color:#7a7a7a;">Commune:</div>
<div class="t s" style="left:1703.70px;top:375.50px;font-size:6.85px;color:#e4e4e4;">PARIS 6E ARRONDISSEMENT (75106)</div>
<div class="t s" style="left:1528.75px;top:392.01px;font-size:6.6px;color:#7a7a7a;">Section:</div>
<div class="t s" style="left:1528.75px;top:401.40px;font-size:6.85px;color:#e4e4e4;">BM</div>
<div class="t s" style="left:1703.70px;top:392.01px;font-size:6.6px;color:#7a7a7a;">N° Plan:</div>
<div class="t s" style="left:1703.70px;top:401.40px;font-size:6.85px;color:#e4e4e4;">21</div>
<div class="t s" style="left:1528.75px;top:418.21px;font-size:6.6px;color:#7a7a7a;">Surface:</div>
<div class="t s" style="left:1528.75px;top:427.80px;font-size:6.85px;color:#e4e4e4;">774 m²</div>
<div class="t s" style="left:1528.75px;top:444.11px;font-size:6.6px;color:#7a7a7a;">Adresse:</div>
<div class="t s" style="left:1528.75px;top:454.20px;font-size:6.85px;color:#e4e4e4;">56 RUE JACOB 75006 PARIS 6E ARRONDISSEMENT</div>
<div class="t s" style="left:1528.75px;top:470.41px;font-size:6.6px;color:#7a7a7a;">Département:</div>
<div class="t s" style="left:1528.75px;top:480.60px;font-size:6.85px;color:#e4e4e4;">PARIS</div>
<div class="t s" style="left:1703.70px;top:470.41px;font-size:6.6px;color:#7a7a7a;">Région:</div>
<div class="t s" style="left:1703.70px;top:480.60px;font-size:6.85px;color:#e4e4e4;">ÎLE-DE-FRANCE</div>
<div class="b" style="left:1515.5px;top:514px;width:363px;height:107px;background:#171717;border:1px solid #222;border-radius:8px"></div>
<svg class="b" style="left:1528.5px;top:528.5px" width="10" height="10" viewBox="0 0 24 24" fill="none" stroke="#ddd" stroke-width="2.3" stroke-linecap="round" stroke-linejoin="round"><rect x="4" y="2" width="16" height="20" rx="2"/><path d="M14 6h-2.5a1.5 1.5 0 0 0 0 3h1a1.5 1.5 0 0 1 0 3H10M12 5v1.5M12 12v1.5M8 17h8"/></svg>
<div class="t s" style="left:1543.00px;top:529.95px;font-size:8.8px;color:#f0f0f0;font-weight:bold;">Ventes Enregistrées (2)</div>
<div class="t s" style="left:1532.70px;top:563.02px;font-size:6px;color:#d8d8d8;font-weight:bold;">Date</div>
<div class="t s" style="left:1616.90px;top:563.02px;font-size:6px;color:#d8d8d8;font-weight:bold;">Nature</div>
<div class="t s" style="left:1653.00px;top:563.02px;font-size:6px;color:#d8d8d8;font-weight:bold;">Type</div>
<div class="t s" style="right:58.00px;top:563.02px;font-size:6px;color:#d8d8d8;font-weight:bold;">Valeur (€)</div>
<div class="b" style="left:1528px;top:576px;width:336px;height:1px;background:#232323"></div>
<div class="b" style="left:1528px;top:592.3px;width:336px;height:1px;background:#232323"></div>
<div class="t s" style="left:1532.70px;top:581.54px;font-size:6.45px;color:#d0d0d0;">08 septembre 2023</div>
<div class="t s" style="left:1616.90px;top:581.54px;font-size:6.45px;color:#d0d0d0;">vente</div>
<div class="t s" style="left:1653.00px;top:581.67px;font-size:6.3px;color:#d0d0d0;">local industriel. commercial ou assimile</div>
<div class="t s" style="right:58.00px;top:581.67px;font-size:6.3px;color:#d8d8d8;">60 000 000 €</div>
<div class="t s" style="left:1532.70px;top:598.54px;font-size:6.45px;color:#d0d0d0;">26 juillet 2018</div>
<div class="t s" style="left:1616.90px;top:598.54px;font-size:6.45px;color:#d0d0d0;">vente</div>
<div class="t s" style="left:1653.00px;top:598.67px;font-size:6.3px;color:#d0d0d0;">local industriel. commercial ou assimile</div>
<div class="t s" style="right:58.00px;top:598.67px;font-size:6.3px;color:#d8d8d8;">17 850 000 €</div>
<div class="b" style="left:1515.5px;top:633.5px;width:363px;height:91.5px;background:#171717;border:1px solid #222;border-radius:8px"></div>
<svg class="b" style="left:1528.5px;top:649px" width="10" height="10" viewBox="0 0 24 24" fill="none" stroke="#ddd" stroke-width="2.5" stroke-linecap="round" stroke-linejoin="round"><path d="M2 7h20M5 7v14M19 7v14M9 7v7M15 7v7M5 14h14M7 3h10"/></svg>
<div class="t s" style="left:1543.00px;top:649.45px;font-size:8.8px;color:#f0f0f0;font-weight:bold;">Bâtiments (1)</div>
<div class="t s" style="left:1532.70px;top:682.92px;font-size:6px;color:#d8d8d8;font-weight:bold;">Surface</div>
<div class="t s" style="left:1567.00px;top:682.92px;font-size:6px;color:#d8d8d8;font-weight:bold;">Usage</div>
<div class="t s" style="left:1709.40px;top:682.92px;font-size:6px;color:#d8d8d8;font-weight:bold;">Année Const.</div>
<div class="t s" style="left:1761.90px;top:682.92px;font-size:6px;color:#d8d8d8;font-weight:bold;">Murs</div>
<div class="t s" style="left:1816.30px;top:682.92px;font-size:6px;color:#d8d8d8;font-weight:bold;">Toit</div>
<div class="b" style="left:1528px;top:696.5px;width:336px;height:1px;background:#232323"></div>
<div class="t s" style="left:1532.70px;top:701.48px;font-size:6.4px;color:#d0d0d0;">773 m²</div>
<div class="t s" style="left:1567.00px;top:701.48px;font-size:6.4px;color:#d0d0d0;">Tertiaire &amp; Autres, Commercial et services</div>
<div class="t s" style="left:1709.40px;top:701.48px;font-size:6.4px;color:#d0d0d0;">1840</div>
<div class="t s" style="left:1761.90px;top:701.48px;font-size:6.4px;color:#d0d0d0;">INDETERMINE</div>
<div class="t s" style="left:1816.30px;top:701.48px;font-size:6.4px;color:#d0d0d0;">INDETERMINE</div>
</div></body></html>
